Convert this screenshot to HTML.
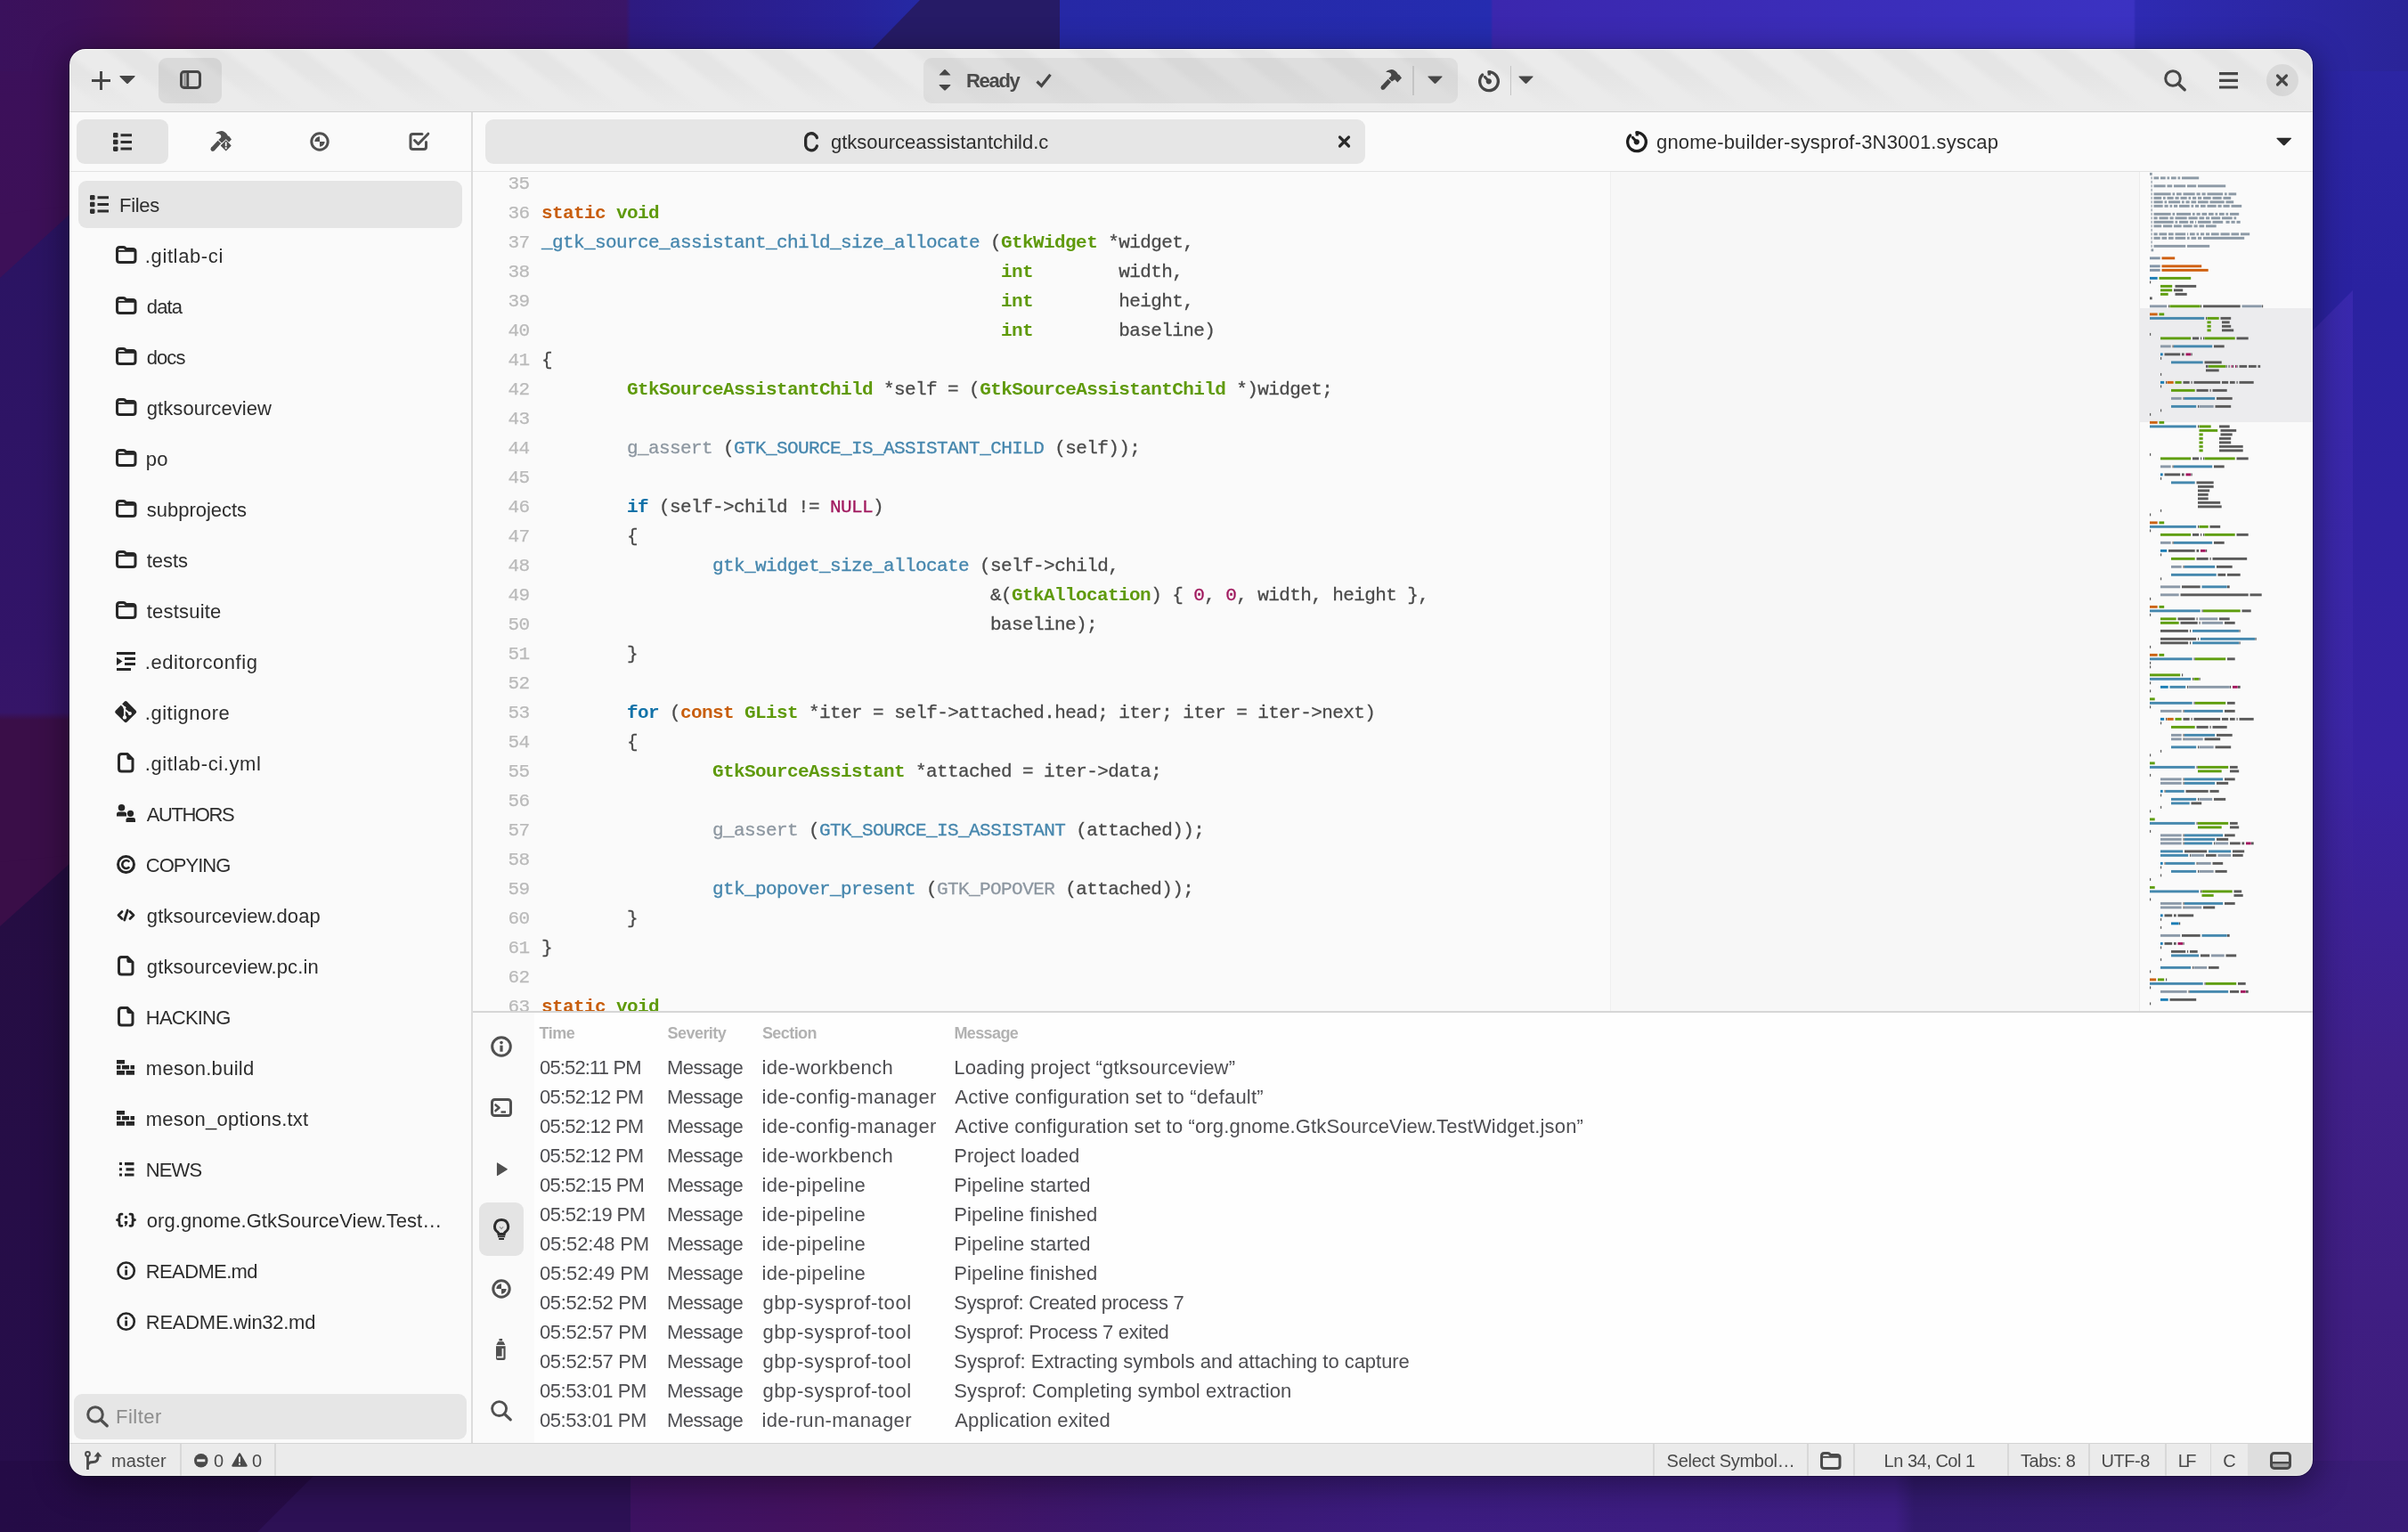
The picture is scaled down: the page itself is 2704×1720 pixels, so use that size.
<!DOCTYPE html><html><head><meta charset="utf-8"><title>Builder</title><style>
html,body{margin:0;padding:0;width:2704px;height:1720px;overflow:hidden;background:#2d1463;}
.b,.t,.m,.i{position:absolute;}
.t{font-family:"Liberation Sans",sans-serif;white-space:pre;line-height:1;}
.m{font-family:"Liberation Mono",monospace;white-space:pre;line-height:1;}
.i{color:#3d3d3d;fill:currentColor;overflow:visible;}
#win{will-change:transform;position:absolute;left:0;top:0;width:2704px;height:1720px;clip-path:inset(55px 107px 63px 78px round 18px);}
#shadow{position:absolute;left:78px;top:55px;width:2519px;height:1602px;border-radius:18px;box-shadow:0 0 0 1px rgba(0,0,0,.25),0 8px 36px 4px rgba(0,0,0,.38);}
.cl{position:absolute;left:608px;height:33px;font-family:"Liberation Mono",monospace;font-size:21px;letter-spacing:-0.6px;white-space:pre;line-height:1;color:#4a4a4a;-webkit-text-stroke:.3px;}
.ln{position:absolute;left:531px;width:63.5px;text-align:right;height:33px;font-family:"Liberation Mono",monospace;font-size:21px;letter-spacing:-0.6px;line-height:1;color:#bababa;-webkit-text-stroke:.25px;}
.cl b{font-weight:700;-webkit-text-stroke:0;}
.k{color:#1272a8}.o{color:#c85e0d}.ty{color:#5f9a0c}.ma{color:#8c96a0}.f{color:#4586ad}.n{color:#a0195e}

</style></head><body>
<svg class="b" style="left:0;top:0;width:2704px;height:1720px" viewBox="0 0 2704 1720" preserveAspectRatio="none">
<defs>
<linearGradient id="gt" x1="0" x2="2704" y1="0" y2="0" gradientUnits="userSpaceOnUse">
<stop offset="0" stop-color="#3a115c"/><stop offset=".03" stop-color="#3c1059"/><stop offset=".075" stop-color="#47104f"/><stop offset=".145" stop-color="#43115a"/><stop offset=".26" stop-color="#3a1568"/><stop offset=".262" stop-color="#2e1a80"/><stop offset=".353" stop-color="#28229a"/><stop offset=".382" stop-color="#2529a4"/><stop offset=".44" stop-color="#2628a5"/><stop offset=".619" stop-color="#252cb0"/><stop offset=".620" stop-color="#3b27ae"/><stop offset=".886" stop-color="#3b32c2"/><stop offset=".887" stop-color="#2e2ab2"/><stop offset="1" stop-color="#2a2498"/></linearGradient>
<linearGradient id="gl" x1="0" x2="0" y1="0" y2="1720" gradientUnits="userSpaceOnUse">
<stop offset="0" stop-color="#3b105b"/><stop offset=".14" stop-color="#3d1058"/><stop offset=".1401" stop-color="#2a1462"/><stop offset=".42" stop-color="#321468"/><stop offset=".465" stop-color="#361568"/><stop offset=".47" stop-color="#3a0e48"/><stop offset=".564" stop-color="#3a0e48"/><stop offset=".5641" stop-color="#250d42"/><stop offset="1" stop-color="#270d4c"/></linearGradient>
<linearGradient id="gr" x1="0" x2="0" y1="0" y2="1720" gradientUnits="userSpaceOnUse">
<stop offset="0" stop-color="#2c26a4"/><stop offset=".19" stop-color="#2a22a0"/><stop offset=".5" stop-color="#3822a2"/><stop offset=".7" stop-color="#40208a"/><stop offset="1" stop-color="#3e1c7a"/></linearGradient>
<linearGradient id="gb" x1="0" x2="2704" y1="0" y2="0" gradientUnits="userSpaceOnUse">
<stop offset="0" stop-color="#240b46"/><stop offset=".26" stop-color="#2a0c48"/><stop offset=".262" stop-color="#3d1262"/><stop offset=".355" stop-color="#45125f"/><stop offset=".477" stop-color="#3a1870"/><stop offset=".59" stop-color="#3c1c80"/><stop offset=".787" stop-color="#3e1e84"/><stop offset=".795" stop-color="#321a6e"/><stop offset="1" stop-color="#3a1c78"/></linearGradient>
<linearGradient id="gband" x1="0" x2="0" y1="326" y2="1150" gradientUnits="userSpaceOnUse"><stop offset="0" stop-color="#3c2ab0" stop-opacity=".85"/><stop offset=".6" stop-color="#3e28a8" stop-opacity=".7"/><stop offset="1" stop-color="#42228c" stop-opacity="0"/></linearGradient>
</defs>
<rect x="0" y="0" width="2704" height="1720" fill="#2d1463"/>
<path d="M0 40H90V1720H0z" fill="url(#gl)"/>
<path d="M0 240V312L90 230z" fill="#3d1058"/>
<path d="M0 968V1040L90 959z" fill="#3a0e48"/>
<path d="M2590 40H2704V1720H2590z" fill="url(#gr)"/>
<path d="M2590 378L2642 326V1150H2590z" fill="url(#gband)"/>
<rect x="0" y="0" width="2704" height="80" fill="url(#gt)"/>
<path d="M1033 0H1190V80H955z" fill="#261b66"/>
<rect x="0" y="1640" width="2704" height="80" fill="url(#gb)"/>
<path d="M369 1640L289 1720H708V1640z" fill="#2d1155"/>
</svg>
<div id="shadow"></div><div id="win">
<div class="b" style="left:78px;top:55px;width:2519px;height:71px;background:#ebebeb;background-image:linear-gradient(to bottom,rgba(235,235,235,0) 0%,rgba(235,235,235,0) 40%,rgba(235,235,235,1) 100%),repeating-linear-gradient(37.6deg,#ebebeb 0px,#ebebeb 22px,#e5e5e5 30px,#e5e5e5 47px,#ebebeb 55px);"></div>
<div class="b" style="left:78px;top:125px;width:2519px;height:1px;background:#d2d2d2;"></div>
<div class="b" style="left:78px;top:126px;width:451px;height:1494px;background:#fafafa;"></div>
<div class="b" style="left:529px;top:126px;width:2px;height:1494px;background:#dcdcdc;"></div>
<div class="b" style="left:531px;top:126px;width:2066px;height:1010px;background:#fafafa;"></div>
<div class="b" style="left:78px;top:192px;width:451px;height:1px;background:#e2e2e2;"></div>
<div class="b" style="left:531px;top:192px;width:2066px;height:1px;background:#e2e2e2;"></div>
<div class="b" style="left:1808px;top:193px;width:594px;height:942px;background:#f7f7f7;"></div>
<div class="b" style="left:1808px;top:193px;width:1px;height:942px;background:#efefef;"></div>
<div class="b" style="left:2402px;top:193px;width:1px;height:942px;background:#ececec;"></div>
<div class="b" style="left:2403px;top:346px;width:194px;height:128px;background:#ececee;"></div>
<div class="b" style="left:531px;top:1135px;width:2066px;height:2px;background:#d6d6d6;"></div>
<div class="b" style="left:531px;top:1137px;width:69px;height:483px;background:#fafafa;"></div>
<div class="b" style="left:600px;top:1137px;width:1997px;height:483px;background:#fefefe;"></div>
<div class="b" style="left:78px;top:1620px;width:2519px;height:37px;background:#ebebeb;"></div>
<div class="b" style="left:78px;top:1620px;width:2519px;height:1px;background:#d4d4d4;"></div>
<svg class="i" style="left:102.5px;top:79.5px;width:21px;height:21px;color:#464646;" viewBox="0 0 21 21"><path d="M0 9h21v3H0z M9 0h3v21H9z"/></svg>
<svg class="i" style="left:134.0px;top:85.4px;width:18px;height:9.2px;color:#464646;" viewBox="0 0 18 9"><path d="M1.2 0h15.6q1.6 0 .5 1.2L10 8.5q-1 1-2 0L.7 1.2Q-.4 0 1.2 0z"/></svg>
<div class="b" style="left:178px;top:65px;width:71px;height:51px;background:rgba(0,0,0,.07);border-radius:9px;"></div>
<svg class="i" style="left:201.5px;top:79.0px;width:24px;height:21px;color:#464646;" viewBox="0 0 24 21"><rect x="4" y="3" width="5" height="15" opacity=".38"/><rect x="1.5" y="1.5" width="21" height="18" rx="3.2" stroke="currentColor" fill="none" stroke-width="3"/><rect x="7.6" y="2" width="2.6" height="17"/></svg>
<div class="b" style="left:1037px;top:65px;width:600px;height:51px;background:rgba(0,0,0,.055);border-radius:9px;"></div>
<svg class="i" style="left:1054.0px;top:78.0px;width:14px;height:6.5px;color:#464646;" viewBox="0 0 18 9"><path d="M1.2 9h15.6q1.6 0 .5-1.2L10 .5q-1-1-2 0L.7 7.8Q-.4 9 1.2 9z"/></svg>
<svg class="i" style="left:1054.0px;top:95.3px;width:14px;height:6.7px;color:#464646;" viewBox="0 0 18 9"><path d="M1.2 0h15.6q1.6 0 .5 1.2L10 8.5q-1 1-2 0L.7 1.2Q-.4 0 1.2 0z"/></svg>
<span class="t" style="left:1085.0px;top:80px;font-size:22px;font-weight:700;color:#4a4a4a;letter-spacing:-1.30px;">Ready</span>
<svg class="i" style="left:1163.0px;top:82.0px;width:18px;height:16px;color:#464646;" viewBox="0 0 18 16"><path d="M1.5 9.5l5 4.8L16.5 1.8" stroke="currentColor" fill="none" stroke-width="3.2"/></svg>
<svg class="i" style="left:1550.0px;top:78.0px;width:24px;height:23px;color:#464646;" viewBox="0 0 24 23"><circle cx="2.900" cy="20.500" r="2.400"/><path d="M2.900 20.500L10.400 12.400" stroke="currentColor" fill="none" stroke-width="4.800"/><path d="M6.200 2.700C7.500 1.500 9.300.600 12.600 0c2.400 0 4.400 1.500 5.700 3l2 3 .600-.500L24 9.400l-4.700 5.100-3-3.200-3.300 2.100L9.300 10 12 7.400c.500-1.400.300-2.400-.500-3.200C10.500 3.300 9 3 8 3z"/></svg>
<div class="b" style="left:1586px;top:74px;width:1.5px;height:33px;background:#c4c4c4;"></div>
<svg class="i" style="left:1603.0px;top:85.2px;width:17px;height:9.3px;color:#464646;" viewBox="0 0 18 9"><path d="M1.2 0h15.6q1.6 0 .5 1.2L10 8.5q-1 1-2 0L.7 1.2Q-.4 0 1.2 0z"/></svg>
<svg class="i" style="left:1659.5px;top:78.6px;width:24px;height:24px;color:#464646;" viewBox="0 0 24 24"><path d="M12 1.950A10.350 10.350 0 1 1 4.680 4.980" stroke="currentColor" fill="none" stroke-width="3.300" stroke-linecap="round"/><path d="M12.300.300V5.600" stroke="currentColor" fill="none" stroke-width="3.300"/><circle cx="11.800" cy="12.300" r="3.100"/><path d="M11.800 12.300L7.300 7.300" stroke="currentColor" fill="none" stroke-width="3" stroke-linecap="round"/></svg>
<div class="b" style="left:1695.5px;top:74px;width:1.5px;height:33px;background:#c4c4c4;"></div>
<svg class="i" style="left:1705.0px;top:85.2px;width:17px;height:9.3px;color:#464646;" viewBox="0 0 18 9"><path d="M1.2 0h15.6q1.6 0 .5 1.2L10 8.5q-1 1-2 0L.7 1.2Q-.4 0 1.2 0z"/></svg>
<svg class="i" style="left:2430.0px;top:78.0px;width:25px;height:24px;color:#464646;" viewBox="0 0 25 24"><circle cx="10" cy="10" r="8.300" stroke="currentColor" fill="none" stroke-width="3"/><path d="M16 16l7.200 6.800" stroke="currentColor" fill="none" stroke-width="3.400" stroke-linecap="round"/></svg>
<svg class="i" style="left:2492.0px;top:80.7px;width:21px;height:19px;color:#464646;" viewBox="0 0 21 19"><path d="M0 0h21v3.200H0z M0 7.700h21v3.200H0z M0 15.400h21v3.200H0z"/></svg>
<div class="b" style="left:2544.5px;top:72px;width:36px;height:36px;background:rgba(0,0,0,.075);border-radius:18px;"></div>
<svg class="i" style="left:2556.0px;top:84.0px;width:13px;height:12px;color:#464646;" viewBox="0 0 13 12"><path d="M1.500 1l10 10M11.500 1l-10 10" stroke="currentColor" fill="none" stroke-width="3.200" stroke-linecap="round"/></svg>
<div class="b" style="left:86px;top:134px;width:103px;height:50px;background:#e4e4e4;border-radius:9px;"></div>
<svg class="i" style="left:126.5px;top:148.5px;width:21px;height:21px;color:#2e2e2e;" viewBox="0 0 21 21"><rect x="0" y="0" width="5.500" height="5.500" rx="1.300"/><rect x="0" y="7.700" width="5.500" height="5.500" rx="1.300"/><rect x="0" y="15.400" width="5.500" height="5.500" rx="1.300"/><path d="M8.500 1.200H21v3H8.500z M8.500 8.900H21v3H8.500z M8.500 16.600H21v3H8.500z"/></svg>
<svg class="i" style="left:236.0px;top:147.0px;width:24.5px;height:24px;color:#505050;" viewBox="0 0 24.5 24"><circle cx="2.900" cy="20.500" r="2.400"/><path d="M2.900 20.500L10.400 12.400" stroke="currentColor" fill="none" stroke-width="4.800"/><path d="M6.200 2.700C7.500 1.500 9.300.600 12.600 0c2.400 0 4.400 1.500 5.700 3l2 3 .600-.500L24 9.400l-4.700 5.100-3-3.200-3.300 2.100L9.300 10 12 7.400c.500-1.400.300-2.400-.500-3.200C10.500 3.300 9 3 8 3z"/><path d="M17.700 9.200l7.300 7.300-7.300 7.300-7.300-7.300z" fill="#fafafa"/><path d="M17.700 10.900l5.600 5.600q.600.600 0 1.200l-5 5q-.600.600-1.200 0l-5-5q-.600-.600 0-1.200l5-5q.600-.600 1.200 0z" transform="translate(0 -0.600)"/><path d="M16.800 12.600h1.800v4.600h-1.800z M16.700 18.200h2v2h-2z" fill="#fafafa"/></svg>
<svg class="i" style="left:347.0px;top:147.0px;width:24px;height:24px;color:#505050;" viewBox="0 0 24 24"><circle cx="12" cy="12" r="9.200" stroke="currentColor" fill="none" stroke-width="3"/><path d="M12 12V6.300A5.700 5.700 0 0 0 6.300 12z M12 12v5.700A5.700 5.700 0 0 0 17.700 12z"/></svg>
<svg class="i" style="left:459.2px;top:147.0px;width:24px;height:24px;color:#505050;" viewBox="0 0 24 24"><path d="M19.500 12.500v5.500q0 2.500-2.500 2.500H4.500Q2 20.500 2 18V6q0-2.500 2.500-2.500H15" stroke="currentColor" fill="none" stroke-width="3" stroke-linecap="round"/><path d="M6.500 10.500l4.200 4.200L21.800 3.200" stroke="currentColor" fill="none" stroke-width="3" stroke-linecap="round" stroke-linejoin="round"/></svg>
<div class="b" style="left:88px;top:203px;width:431px;height:53px;background:#e5e5e5;border-radius:9px;"></div>
<svg class="i" style="left:100.8px;top:219.0px;width:21px;height:21px;color:#2e2e2e;" viewBox="0 0 21 21"><rect x="0" y="0" width="5.500" height="5.500" rx="1.300"/><rect x="0" y="7.700" width="5.500" height="5.500" rx="1.300"/><rect x="0" y="15.400" width="5.500" height="5.500" rx="1.300"/><path d="M8.500 1.200H21v3H8.500z M8.500 8.900H21v3H8.500z M8.500 16.600H21v3H8.500z"/></svg>
<span class="t" style="left:134.0px;top:220px;font-size:22px;color:#2e2e2e;letter-spacing:-0.31px;">Files</span>
<svg class="i" style="left:129.6px;top:276.4px;width:23.5px;height:20px;color:#262626;" viewBox="0 0 23.5 20"><path d="M1.500 4.500Q1.500 1.500 4.500 1.500H8.500Q10.500 1.500 11 3.500H19Q22 3.500 22 6.500V15.500Q22 18.500 19 18.500H4.500Q1.500 18.500 1.500 15.500z" stroke="currentColor" fill="none" stroke-width="3" stroke-linejoin="round"/><path d="M2.500 5.800H21" stroke="currentColor" fill="none" stroke-width="2"/></svg>
<span class="t" style="left:162.8px;top:277px;font-size:22px;color:#2e2e2e;letter-spacing:0.62px;">.gitlab-ci</span>
<svg class="i" style="left:129.6px;top:333.4px;width:23.5px;height:20px;color:#262626;" viewBox="0 0 23.5 20"><path d="M1.500 4.500Q1.500 1.500 4.500 1.500H8.500Q10.500 1.500 11 3.500H19Q22 3.500 22 6.500V15.500Q22 18.500 19 18.500H4.500Q1.500 18.500 1.500 15.500z" stroke="currentColor" fill="none" stroke-width="3" stroke-linejoin="round"/><path d="M2.500 5.800H21" stroke="currentColor" fill="none" stroke-width="2"/></svg>
<span class="t" style="left:164.8px;top:334px;font-size:22px;color:#2e2e2e;letter-spacing:-0.89px;">data</span>
<svg class="i" style="left:129.6px;top:390.4px;width:23.5px;height:20px;color:#262626;" viewBox="0 0 23.5 20"><path d="M1.500 4.500Q1.500 1.500 4.500 1.500H8.500Q10.500 1.500 11 3.500H19Q22 3.500 22 6.500V15.500Q22 18.500 19 18.500H4.500Q1.500 18.500 1.500 15.500z" stroke="currentColor" fill="none" stroke-width="3" stroke-linejoin="round"/><path d="M2.500 5.800H21" stroke="currentColor" fill="none" stroke-width="2"/></svg>
<span class="t" style="left:164.8px;top:391px;font-size:22px;color:#2e2e2e;letter-spacing:-0.96px;">docs</span>
<svg class="i" style="left:129.6px;top:447.4px;width:23.5px;height:20px;color:#262626;" viewBox="0 0 23.5 20"><path d="M1.500 4.500Q1.500 1.500 4.500 1.500H8.500Q10.500 1.500 11 3.500H19Q22 3.500 22 6.500V15.500Q22 18.500 19 18.500H4.500Q1.500 18.500 1.500 15.500z" stroke="currentColor" fill="none" stroke-width="3" stroke-linejoin="round"/><path d="M2.500 5.800H21" stroke="currentColor" fill="none" stroke-width="2"/></svg>
<span class="t" style="left:164.8px;top:448px;font-size:22px;color:#2e2e2e;letter-spacing:0.06px;">gtksourceview</span>
<svg class="i" style="left:129.6px;top:504.4px;width:23.5px;height:20px;color:#262626;" viewBox="0 0 23.5 20"><path d="M1.500 4.500Q1.500 1.500 4.500 1.500H8.500Q10.500 1.500 11 3.500H19Q22 3.500 22 6.500V15.500Q22 18.500 19 18.500H4.500Q1.500 18.500 1.500 15.500z" stroke="currentColor" fill="none" stroke-width="3" stroke-linejoin="round"/><path d="M2.500 5.800H21" stroke="currentColor" fill="none" stroke-width="2"/></svg>
<span class="t" style="left:163.8px;top:505px;font-size:22px;color:#2e2e2e;letter-spacing:0.26px;">po</span>
<svg class="i" style="left:129.6px;top:561.4px;width:23.5px;height:20px;color:#262626;" viewBox="0 0 23.5 20"><path d="M1.500 4.500Q1.500 1.500 4.500 1.500H8.500Q10.500 1.500 11 3.500H19Q22 3.500 22 6.500V15.500Q22 18.500 19 18.500H4.500Q1.500 18.500 1.500 15.500z" stroke="currentColor" fill="none" stroke-width="3" stroke-linejoin="round"/><path d="M2.500 5.800H21" stroke="currentColor" fill="none" stroke-width="2"/></svg>
<span class="t" style="left:164.8px;top:562px;font-size:22px;color:#2e2e2e;letter-spacing:-0.03px;">subprojects</span>
<svg class="i" style="left:129.6px;top:618.4px;width:23.5px;height:20px;color:#262626;" viewBox="0 0 23.5 20"><path d="M1.500 4.500Q1.500 1.500 4.500 1.500H8.500Q10.500 1.500 11 3.500H19Q22 3.500 22 6.500V15.500Q22 18.500 19 18.500H4.500Q1.500 18.500 1.500 15.500z" stroke="currentColor" fill="none" stroke-width="3" stroke-linejoin="round"/><path d="M2.500 5.800H21" stroke="currentColor" fill="none" stroke-width="2"/></svg>
<span class="t" style="left:164.8px;top:619px;font-size:22px;color:#2e2e2e;letter-spacing:-0.06px;">tests</span>
<svg class="i" style="left:129.6px;top:675.4px;width:23.5px;height:20px;color:#262626;" viewBox="0 0 23.5 20"><path d="M1.500 4.500Q1.500 1.500 4.500 1.500H8.500Q10.500 1.500 11 3.500H19Q22 3.500 22 6.500V15.500Q22 18.500 19 18.500H4.500Q1.500 18.500 1.500 15.500z" stroke="currentColor" fill="none" stroke-width="3" stroke-linejoin="round"/><path d="M2.500 5.800H21" stroke="currentColor" fill="none" stroke-width="2"/></svg>
<span class="t" style="left:164.8px;top:676px;font-size:22px;color:#2e2e2e;letter-spacing:0.19px;">testsuite</span>
<svg class="i" style="left:130.8px;top:731.9px;width:21px;height:21px;color:#262626;" viewBox="0 0 21 21"><path d="M0 0h21v3H0z M9 6h12v3H9z M9 12h12v3H9z M0 18h16v3H0z M0 6l6.500 4.500L0 15z"/></svg>
<span class="t" style="left:162.8px;top:733px;font-size:22px;color:#2e2e2e;letter-spacing:0.52px;">.editorconfig</span>
<svg class="i" style="left:129.1px;top:787.2px;width:24.4px;height:24.4px;color:#262626;" viewBox="0 0 24.4 24.4"><rect x="-9.100" y="-9.100" width="18.200" height="18.200" rx="2.100" transform="translate(12.200 12.200) rotate(45)"/><g stroke="#fafafa" stroke-width="1.900" fill="none"><path d="M7.200 3.700L10.900 7.300V18.400"/><path d="M11 9.600L16.800 14.100"/></g><circle cx="11" cy="18.400" r="2.200" fill="#fafafa"/><circle cx="16.800" cy="14.100" r="2.100" fill="#fafafa"/><circle cx="10.900" cy="7.600" r="1.600" fill="#fafafa"/></svg>
<span class="t" style="left:162.8px;top:790px;font-size:22px;color:#2e2e2e;letter-spacing:0.50px;">.gitignore</span>
<svg class="i" style="left:132.1px;top:845.1px;width:18.5px;height:22.5px;color:#262626;" viewBox="0 0 18.5 22.5"><path d="M1.500 4.500Q1.500 1.500 4.500 1.500H11.200L17 7.300V18Q17 21 14 21H4.500Q1.500 21 1.500 18z" stroke="currentColor" fill="none" stroke-width="3" stroke-linejoin="round"/><path d="M10.300 1.500V5.500Q10.300 8 12.800 8H17z"/></svg>
<span class="t" style="left:162.8px;top:847px;font-size:22px;color:#2e2e2e;letter-spacing:0.60px;">.gitlab-ci.yml</span>
<svg class="i" style="left:130.8px;top:903.4px;width:21px;height:20px;color:#262626;" viewBox="0 0 21 20"><circle cx="5.500" cy="3.800" r="3.800"/><path d="M0 13.500v-2.500q0-2.500 2.500-2.500h6q2.500 0 2.500 2.500v2.500z"/><circle cx="15.500" cy="10.300" r="3.600"/><path d="M10.500 20v-2.700q0-2.400 2.400-2.400h5.700q2.400 0 2.400 2.400v2.700z"/></svg>
<span class="t" style="left:164.8px;top:904px;font-size:22px;color:#2e2e2e;letter-spacing:-1.46px;">AUTHORS</span>
<svg class="i" style="left:130.8px;top:959.9px;width:21px;height:21px;color:#262626;" viewBox="0 0 21 21"><circle cx="10.500" cy="10.500" r="9" stroke="currentColor" fill="none" stroke-width="3"/><path d="M14.300 7.700A4.500 4.500 0 1 0 14.300 13.300" stroke="currentColor" fill="none" stroke-width="2.600"/></svg>
<span class="t" style="left:163.8px;top:961px;font-size:22px;color:#2e2e2e;letter-spacing:-0.99px;">COPYING</span>
<svg class="i" style="left:130.8px;top:1020.9px;width:21px;height:13px;color:#262626;" viewBox="0 0 21 13"><path d="M6 2.500L2 6.500l4 4M15 2.500l4 4-4 4M12.300 1L8.700 12" stroke="currentColor" fill="none" stroke-width="2.800" stroke-linecap="round" stroke-linejoin="round"/></svg>
<span class="t" style="left:164.8px;top:1018px;font-size:22px;color:#2e2e2e;letter-spacing:0.10px;">gtksourceview.doap</span>
<svg class="i" style="left:132.1px;top:1073.2px;width:18.5px;height:22.5px;color:#262626;" viewBox="0 0 18.5 22.5"><path d="M1.500 4.500Q1.500 1.500 4.500 1.500H11.200L17 7.300V18Q17 21 14 21H4.500Q1.500 21 1.500 18z" stroke="currentColor" fill="none" stroke-width="3" stroke-linejoin="round"/><path d="M10.300 1.500V5.500Q10.300 8 12.800 8H17z"/></svg>
<span class="t" style="left:164.8px;top:1075px;font-size:22px;color:#2e2e2e;letter-spacing:0.12px;">gtksourceview.pc.in</span>
<svg class="i" style="left:132.1px;top:1130.2px;width:18.5px;height:22.5px;color:#262626;" viewBox="0 0 18.5 22.5"><path d="M1.500 4.500Q1.500 1.500 4.500 1.500H11.200L17 7.300V18Q17 21 14 21H4.500Q1.500 21 1.500 18z" stroke="currentColor" fill="none" stroke-width="3" stroke-linejoin="round"/><path d="M10.300 1.500V5.500Q10.300 8 12.800 8H17z"/></svg>
<span class="t" style="left:163.8px;top:1132px;font-size:22px;color:#2e2e2e;letter-spacing:-0.79px;">HACKING</span>
<svg class="i" style="left:131.3px;top:1189.9px;width:20px;height:17px;color:#262626;" viewBox="0 0 20 17"><path d="M0 0h9v4.500H0z M0 6h4.500v4.500H0z M6 6h8v4.500H6z M15.500 6H20v4.500h-4.500z M0 12h9v4.700H0z M10.500 12H20v4.700h-9.500z"/></svg>
<span class="t" style="left:163.8px;top:1189px;font-size:22px;color:#2e2e2e;letter-spacing:0.28px;">meson.build</span>
<svg class="i" style="left:131.3px;top:1246.9px;width:20px;height:17px;color:#262626;" viewBox="0 0 20 17"><path d="M0 0h9v4.500H0z M0 6h4.500v4.500H0z M6 6h8v4.500H6z M15.500 6H20v4.500h-4.500z M0 12h9v4.700H0z M10.500 12H20v4.700h-9.500z"/></svg>
<span class="t" style="left:163.8px;top:1246px;font-size:22px;color:#2e2e2e;letter-spacing:0.24px;">meson_options.txt</span>
<svg class="i" style="left:133.9px;top:1304.7px;width:16.5px;height:15.5px;color:#262626;" viewBox="0 0 16.5 15.5"><path d="M0 0h3v3H0z M0 6.200h3v3H0z M0 12.400h3v3H0z M6 0h10.500v3.200H6z M7.500 6.200h9v3.200h-9z M6 12.400h10.500v3.200H6z"/></svg>
<span class="t" style="left:163.8px;top:1303px;font-size:22px;color:#2e2e2e;letter-spacing:-0.88px;">NEWS</span>
<svg class="i" style="left:129.8px;top:1361.7px;width:23px;height:15.5px;color:#262626;" viewBox="0 0 23 15.5"><path d="M7 1.200H6Q4 1.200 4 3.200V5.500Q4 7.700 1.500 7.700Q4 7.700 4 10v2.300q0 2 2 2h1M16 1.200h1q2 0 2 2V5.500q0 2.200 2.500 2.200Q19 7.700 19 10v2.300q0 2-2 2h-1" stroke="currentColor" fill="none" stroke-width="2.800" stroke-linejoin="round" stroke-linecap="round"/><circle cx="11.500" cy="4.500" r="1.700"/><path d="M9.800 9h3.400v2.500l-1.700 3h-1.700l1-2.500h-1z"/></svg>
<span class="t" style="left:164.8px;top:1360px;font-size:22px;color:#2e2e2e;letter-spacing:0.06px;">org.gnome.GtkSourceView.Test…</span>
<svg class="i" style="left:130.7px;top:1415.8px;width:21.3px;height:21.3px;color:#262626;" viewBox="0 0 24 24"><circle cx="12" cy="12" r="10.300" stroke="currentColor" fill="none" stroke-width="3"/><circle cx="12" cy="7.600" r="1.800"/><path d="M10.400 10.700h3.200v7h-3.200z"/></svg>
<span class="t" style="left:163.8px;top:1417px;font-size:22px;color:#2e2e2e;letter-spacing:-0.63px;">README.md</span>
<svg class="i" style="left:130.7px;top:1472.8px;width:21.3px;height:21.3px;color:#262626;" viewBox="0 0 24 24"><circle cx="12" cy="12" r="10.300" stroke="currentColor" fill="none" stroke-width="3"/><circle cx="12" cy="7.600" r="1.800"/><path d="M10.400 10.700h3.200v7h-3.200z"/></svg>
<span class="t" style="left:163.8px;top:1474px;font-size:22px;color:#2e2e2e;letter-spacing:-0.27px;">README.win32.md</span>
<div class="b" style="left:83px;top:1565px;width:441px;height:51px;background:#e6e6e6;border-radius:9px;"></div>
<svg class="i" style="left:96.5px;top:1578.0px;width:25px;height:24px;color:#505050;" viewBox="0 0 25 24"><circle cx="10" cy="10" r="8.300" stroke="currentColor" fill="none" stroke-width="3"/><path d="M16 16l7.200 6.800" stroke="currentColor" fill="none" stroke-width="3.400" stroke-linecap="round"/></svg>
<span class="t" style="left:130.0px;top:1580px;font-size:22px;color:#8c8c8c;letter-spacing:0.49px;">Filter</span>
<div class="b" style="left:545px;top:133.5px;width:988px;height:50.5px;background:#e6e6e6;border-radius:9px;"></div>
<svg class="i" style="left:902.9px;top:148.6px;width:16.3px;height:20.6px;color:#2a2a2a;" viewBox="0 0 16.3 20.6"><path d="M14.400 5.700A6.500 6.500 0 0 0 1.650 8.150V12.450A6.500 6.500 0 0 0 14.400 14.900" stroke="currentColor" fill="none" stroke-width="3.300" stroke-linecap="round"/></svg>
<span class="t" style="left:933.0px;top:149px;font-size:22px;color:#2e2e2e;letter-spacing:-0.01px;">gtksourceassistantchild.c</span>
<svg class="i" style="left:1503.0px;top:153.0px;width:13px;height:12px;color:#2a2a2a;" viewBox="0 0 13 12"><path d="M1.500 1l10 10M11.500 1l-10 10" stroke="currentColor" fill="none" stroke-width="3.200" stroke-linecap="round"/></svg>
<svg class="i" style="left:1826.0px;top:147.0px;width:24px;height:24px;color:#1e1e1e;" viewBox="0 0 24 24"><path d="M12 1.950A10.350 10.350 0 1 1 4.680 4.980" stroke="currentColor" fill="none" stroke-width="3.300" stroke-linecap="round"/><path d="M12.300.300V5.600" stroke="currentColor" fill="none" stroke-width="3.300"/><circle cx="11.800" cy="12.300" r="3.100"/><path d="M11.800 12.300L7.300 7.300" stroke="currentColor" fill="none" stroke-width="3" stroke-linecap="round"/></svg>
<span class="t" style="left:1860.0px;top:149px;font-size:22px;color:#2e2e2e;letter-spacing:0.18px;">gnome-builder-sysprof-3N3001.syscap</span>
<svg class="i" style="left:2555.5px;top:154.0px;width:17.5px;height:10px;color:#2a2a2a;" viewBox="0 0 18 9"><path d="M1.2 0h15.6q1.6 0 .5 1.2L10 8.5q-1 1-2 0L.7 1.2Q-.4 0 1.2 0z"/></svg>
<div class="b" style="left:531px;top:193px;width:1871px;height:942px;overflow:hidden">
<div class="ln" style="left:0;top:3.0px">35</div>
<div class="ln" style="left:0;top:36.0px">36</div>
<div class="cl" style="left:77px;top:36.0px"><b class="o">static</b> <b class="ty">void</b></div>
<div class="ln" style="left:0;top:69.0px">37</div>
<div class="cl" style="left:77px;top:69.0px"><span class="f">_gtk_source_assistant_child_size_allocate</span> (<b class="ty">GtkWidget</b> *widget,</div>
<div class="ln" style="left:0;top:102.0px">38</div>
<div class="cl" style="left:77px;top:102.0px">                                           <b class="ty">int</b>        width,</div>
<div class="ln" style="left:0;top:135.0px">39</div>
<div class="cl" style="left:77px;top:135.0px">                                           <b class="ty">int</b>        height,</div>
<div class="ln" style="left:0;top:168.0px">40</div>
<div class="cl" style="left:77px;top:168.0px">                                           <b class="ty">int</b>        baseline)</div>
<div class="ln" style="left:0;top:201.0px">41</div>
<div class="cl" style="left:77px;top:201.0px">{</div>
<div class="ln" style="left:0;top:234.0px">42</div>
<div class="cl" style="left:77px;top:234.0px">        <b class="ty">GtkSourceAssistantChild</b> *self = (<b class="ty">GtkSourceAssistantChild</b> *)widget;</div>
<div class="ln" style="left:0;top:267.0px">43</div>
<div class="ln" style="left:0;top:300.0px">44</div>
<div class="cl" style="left:77px;top:300.0px">        <span class="ma">g_assert</span> (<span class="f">GTK_SOURCE_IS_ASSISTANT_CHILD</span> (self));</div>
<div class="ln" style="left:0;top:333.0px">45</div>
<div class="ln" style="left:0;top:366.0px">46</div>
<div class="cl" style="left:77px;top:366.0px">        <b class="k">if</b> (self-&gt;child != <span class="n">NULL</span>)</div>
<div class="ln" style="left:0;top:399.0px">47</div>
<div class="cl" style="left:77px;top:399.0px">        {</div>
<div class="ln" style="left:0;top:432.0px">48</div>
<div class="cl" style="left:77px;top:432.0px">                <span class="f">gtk_widget_size_allocate</span> (self-&gt;child,</div>
<div class="ln" style="left:0;top:465.0px">49</div>
<div class="cl" style="left:77px;top:465.0px">                                          &amp;(<b class="ty">GtkAllocation</b>) { <span class="n">0</span>, <span class="n">0</span>, width, height },</div>
<div class="ln" style="left:0;top:498.0px">50</div>
<div class="cl" style="left:77px;top:498.0px">                                          baseline);</div>
<div class="ln" style="left:0;top:531.0px">51</div>
<div class="cl" style="left:77px;top:531.0px">        }</div>
<div class="ln" style="left:0;top:564.0px">52</div>
<div class="ln" style="left:0;top:597.0px">53</div>
<div class="cl" style="left:77px;top:597.0px">        <b class="k">for</b> (<b class="o">const</b> <b class="ty">GList</b> *iter = self-&gt;attached.head; iter; iter = iter-&gt;next)</div>
<div class="ln" style="left:0;top:630.0px">54</div>
<div class="cl" style="left:77px;top:630.0px">        {</div>
<div class="ln" style="left:0;top:663.0px">55</div>
<div class="cl" style="left:77px;top:663.0px">                <b class="ty">GtkSourceAssistant</b> *attached = iter-&gt;data;</div>
<div class="ln" style="left:0;top:696.0px">56</div>
<div class="ln" style="left:0;top:729.0px">57</div>
<div class="cl" style="left:77px;top:729.0px">                <span class="ma">g_assert</span> (<span class="f">GTK_SOURCE_IS_ASSISTANT</span> (attached));</div>
<div class="ln" style="left:0;top:762.0px">58</div>
<div class="ln" style="left:0;top:795.0px">59</div>
<div class="cl" style="left:77px;top:795.0px">                <span class="f">gtk_popover_present</span> (<span class="ma">GTK_POPOVER</span> (attached));</div>
<div class="ln" style="left:0;top:828.0px">60</div>
<div class="cl" style="left:77px;top:828.0px">        }</div>
<div class="ln" style="left:0;top:861.0px">61</div>
<div class="cl" style="left:77px;top:861.0px">}</div>
<div class="ln" style="left:0;top:894.0px">62</div>
<div class="ln" style="left:0;top:927.0px">63</div>
<div class="cl" style="left:77px;top:927.0px"><b class="o">static</b> <b class="ty">void</b></div>
</div>
<svg class="b" style="left:0;top:0;width:2704px;height:1720px" viewBox="0 0 2704 1720" shape-rendering="auto"><rect x="2414.0" y="193.90" width="2.7" height="2.9" fill="#8d9aa6"/><rect x="2415.5" y="198.40" width="1.2" height="2.9" fill="#8d9aa6"/><rect x="2418.5" y="198.40" width="5.7" height="2.9" fill="#8d9aa6"/><rect x="2426.0" y="198.40" width="5.7" height="2.9" fill="#8d9aa6"/><rect x="2433.5" y="198.40" width="2.7" height="2.9" fill="#8d9aa6"/><rect x="2438.0" y="198.40" width="5.7" height="2.9" fill="#8d9aa6"/><rect x="2445.5" y="198.40" width="2.7" height="2.9" fill="#8d9aa6"/><rect x="2450.0" y="198.40" width="19.2" height="2.9" fill="#8d9aa6"/><rect x="2415.5" y="202.90" width="1.2" height="2.9" fill="#8d9aa6"/><rect x="2415.5" y="207.40" width="1.2" height="2.9" fill="#8d9aa6"/><rect x="2418.5" y="207.40" width="13.2" height="2.9" fill="#8d9aa6"/><rect x="2433.5" y="207.40" width="5.7" height="2.9" fill="#8d9aa6"/><rect x="2441.0" y="207.40" width="13.2" height="2.9" fill="#8d9aa6"/><rect x="2456.0" y="207.40" width="10.2" height="2.9" fill="#8d9aa6"/><rect x="2468.0" y="207.40" width="31.2" height="2.9" fill="#8d9aa6"/><rect x="2415.5" y="211.90" width="1.2" height="2.9" fill="#8d9aa6"/><rect x="2415.5" y="216.40" width="1.2" height="2.9" fill="#8d9aa6"/><rect x="2418.5" y="216.40" width="19.2" height="2.9" fill="#8d9aa6"/><rect x="2439.5" y="216.40" width="2.7" height="2.9" fill="#8d9aa6"/><rect x="2444.0" y="216.40" width="5.7" height="2.9" fill="#8d9aa6"/><rect x="2451.5" y="216.40" width="13.2" height="2.9" fill="#8d9aa6"/><rect x="2466.5" y="216.40" width="4.2" height="2.9" fill="#8d9aa6"/><rect x="2472.5" y="216.40" width="4.2" height="2.9" fill="#8d9aa6"/><rect x="2478.5" y="216.40" width="17.7" height="2.9" fill="#8d9aa6"/><rect x="2498.0" y="216.40" width="2.7" height="2.9" fill="#8d9aa6"/><rect x="2502.5" y="216.40" width="8.7" height="2.9" fill="#8d9aa6"/><rect x="2415.5" y="220.90" width="1.2" height="2.9" fill="#8d9aa6"/><rect x="2418.5" y="220.90" width="8.7" height="2.9" fill="#8d9aa6"/><rect x="2429.0" y="220.90" width="2.7" height="2.9" fill="#8d9aa6"/><rect x="2433.5" y="220.90" width="7.2" height="2.9" fill="#8d9aa6"/><rect x="2442.5" y="220.90" width="4.2" height="2.9" fill="#8d9aa6"/><rect x="2448.5" y="220.90" width="7.2" height="2.9" fill="#8d9aa6"/><rect x="2457.5" y="220.90" width="2.7" height="2.9" fill="#8d9aa6"/><rect x="2462.0" y="220.90" width="4.2" height="2.9" fill="#8d9aa6"/><rect x="2468.0" y="220.90" width="4.2" height="2.9" fill="#8d9aa6"/><rect x="2474.0" y="220.90" width="8.7" height="2.9" fill="#8d9aa6"/><rect x="2484.5" y="220.90" width="10.2" height="2.9" fill="#8d9aa6"/><rect x="2496.5" y="220.90" width="8.7" height="2.9" fill="#8d9aa6"/><rect x="2415.5" y="225.40" width="1.2" height="2.9" fill="#8d9aa6"/><rect x="2418.5" y="225.40" width="10.2" height="2.9" fill="#8d9aa6"/><rect x="2430.5" y="225.40" width="2.7" height="2.9" fill="#8d9aa6"/><rect x="2435.0" y="225.40" width="13.2" height="2.9" fill="#8d9aa6"/><rect x="2450.0" y="225.40" width="2.7" height="2.9" fill="#8d9aa6"/><rect x="2454.5" y="225.40" width="4.2" height="2.9" fill="#8d9aa6"/><rect x="2460.5" y="225.40" width="5.7" height="2.9" fill="#8d9aa6"/><rect x="2468.0" y="225.40" width="11.7" height="2.9" fill="#8d9aa6"/><rect x="2481.5" y="225.40" width="16.2" height="2.9" fill="#8d9aa6"/><rect x="2499.5" y="225.40" width="8.7" height="2.9" fill="#8d9aa6"/><rect x="2415.5" y="229.90" width="1.2" height="2.9" fill="#8d9aa6"/><rect x="2418.5" y="229.90" width="10.2" height="2.9" fill="#8d9aa6"/><rect x="2430.5" y="229.90" width="4.2" height="2.9" fill="#8d9aa6"/><rect x="2436.5" y="229.90" width="2.7" height="2.9" fill="#8d9aa6"/><rect x="2441.0" y="229.90" width="4.2" height="2.9" fill="#8d9aa6"/><rect x="2447.0" y="229.90" width="11.7" height="2.9" fill="#8d9aa6"/><rect x="2460.5" y="229.90" width="2.7" height="2.9" fill="#8d9aa6"/><rect x="2465.0" y="229.90" width="4.2" height="2.9" fill="#8d9aa6"/><rect x="2471.0" y="229.90" width="5.7" height="2.9" fill="#8d9aa6"/><rect x="2478.5" y="229.90" width="10.2" height="2.9" fill="#8d9aa6"/><rect x="2490.5" y="229.90" width="4.2" height="2.9" fill="#8d9aa6"/><rect x="2496.5" y="229.90" width="7.2" height="2.9" fill="#8d9aa6"/><rect x="2505.5" y="229.90" width="11.7" height="2.9" fill="#8d9aa6"/><rect x="2415.5" y="234.40" width="1.2" height="2.9" fill="#8d9aa6"/><rect x="2415.5" y="238.90" width="1.2" height="2.9" fill="#8d9aa6"/><rect x="2418.5" y="238.90" width="19.2" height="2.9" fill="#8d9aa6"/><rect x="2439.5" y="238.90" width="2.7" height="2.9" fill="#8d9aa6"/><rect x="2444.0" y="238.90" width="16.2" height="2.9" fill="#8d9aa6"/><rect x="2462.0" y="238.90" width="2.7" height="2.9" fill="#8d9aa6"/><rect x="2466.5" y="238.90" width="4.2" height="2.9" fill="#8d9aa6"/><rect x="2472.5" y="238.90" width="5.7" height="2.9" fill="#8d9aa6"/><rect x="2480.0" y="238.90" width="5.7" height="2.9" fill="#8d9aa6"/><rect x="2487.5" y="238.90" width="2.7" height="2.9" fill="#8d9aa6"/><rect x="2492.0" y="238.90" width="5.7" height="2.9" fill="#8d9aa6"/><rect x="2499.5" y="238.90" width="2.7" height="2.9" fill="#8d9aa6"/><rect x="2504.0" y="238.90" width="10.2" height="2.9" fill="#8d9aa6"/><rect x="2415.5" y="243.40" width="1.2" height="2.9" fill="#8d9aa6"/><rect x="2418.5" y="243.40" width="4.2" height="2.9" fill="#8d9aa6"/><rect x="2424.5" y="243.40" width="10.2" height="2.9" fill="#8d9aa6"/><rect x="2436.5" y="243.40" width="4.2" height="2.9" fill="#8d9aa6"/><rect x="2442.5" y="243.40" width="13.2" height="2.9" fill="#8d9aa6"/><rect x="2457.5" y="243.40" width="10.2" height="2.9" fill="#8d9aa6"/><rect x="2469.5" y="243.40" width="5.7" height="2.9" fill="#8d9aa6"/><rect x="2477.0" y="243.40" width="4.2" height="2.9" fill="#8d9aa6"/><rect x="2483.0" y="243.40" width="10.2" height="2.9" fill="#8d9aa6"/><rect x="2495.0" y="243.40" width="11.7" height="2.9" fill="#8d9aa6"/><rect x="2508.5" y="243.40" width="2.7" height="2.9" fill="#8d9aa6"/><rect x="2415.5" y="247.90" width="1.2" height="2.9" fill="#8d9aa6"/><rect x="2418.5" y="247.90" width="22.2" height="2.9" fill="#8d9aa6"/><rect x="2442.5" y="247.90" width="2.7" height="2.9" fill="#8d9aa6"/><rect x="2447.0" y="247.90" width="10.2" height="2.9" fill="#8d9aa6"/><rect x="2459.0" y="247.90" width="4.2" height="2.9" fill="#8d9aa6"/><rect x="2465.0" y="247.90" width="1.2" height="2.9" fill="#8d9aa6"/><rect x="2468.0" y="247.90" width="14.7" height="2.9" fill="#8d9aa6"/><rect x="2484.5" y="247.90" width="11.7" height="2.9" fill="#8d9aa6"/><rect x="2499.5" y="247.90" width="4.2" height="2.9" fill="#8d9aa6"/><rect x="2505.5" y="247.90" width="4.2" height="2.9" fill="#8d9aa6"/><rect x="2511.5" y="247.90" width="4.2" height="2.9" fill="#8d9aa6"/><rect x="2415.5" y="252.40" width="1.2" height="2.9" fill="#8d9aa6"/><rect x="2418.5" y="252.40" width="8.7" height="2.9" fill="#8d9aa6"/><rect x="2429.0" y="252.40" width="10.2" height="2.9" fill="#8d9aa6"/><rect x="2441.0" y="252.40" width="8.7" height="2.9" fill="#8d9aa6"/><rect x="2451.5" y="252.40" width="10.2" height="2.9" fill="#8d9aa6"/><rect x="2463.5" y="252.40" width="4.2" height="2.9" fill="#8d9aa6"/><rect x="2469.5" y="252.40" width="5.7" height="2.9" fill="#8d9aa6"/><rect x="2477.0" y="252.40" width="11.7" height="2.9" fill="#8d9aa6"/><rect x="2415.5" y="256.90" width="1.2" height="2.9" fill="#8d9aa6"/><rect x="2415.5" y="261.40" width="1.2" height="2.9" fill="#8d9aa6"/><rect x="2418.5" y="261.40" width="4.2" height="2.9" fill="#8d9aa6"/><rect x="2424.5" y="261.40" width="8.7" height="2.9" fill="#8d9aa6"/><rect x="2435.0" y="261.40" width="5.7" height="2.9" fill="#8d9aa6"/><rect x="2442.5" y="261.40" width="11.7" height="2.9" fill="#8d9aa6"/><rect x="2456.0" y="261.40" width="1.2" height="2.9" fill="#8d9aa6"/><rect x="2459.0" y="261.40" width="5.7" height="2.9" fill="#8d9aa6"/><rect x="2466.5" y="261.40" width="2.7" height="2.9" fill="#8d9aa6"/><rect x="2471.0" y="261.40" width="4.2" height="2.9" fill="#8d9aa6"/><rect x="2477.0" y="261.40" width="4.2" height="2.9" fill="#8d9aa6"/><rect x="2483.0" y="261.40" width="8.7" height="2.9" fill="#8d9aa6"/><rect x="2493.5" y="261.40" width="10.2" height="2.9" fill="#8d9aa6"/><rect x="2505.5" y="261.40" width="8.7" height="2.9" fill="#8d9aa6"/><rect x="2516.0" y="261.40" width="10.2" height="2.9" fill="#8d9aa6"/><rect x="2415.5" y="265.90" width="1.2" height="2.9" fill="#8d9aa6"/><rect x="2418.5" y="265.90" width="7.2" height="2.9" fill="#8d9aa6"/><rect x="2427.5" y="265.90" width="5.7" height="2.9" fill="#8d9aa6"/><rect x="2435.0" y="265.90" width="5.7" height="2.9" fill="#8d9aa6"/><rect x="2442.5" y="265.90" width="11.7" height="2.9" fill="#8d9aa6"/><rect x="2456.0" y="265.90" width="2.7" height="2.9" fill="#8d9aa6"/><rect x="2460.5" y="265.90" width="5.7" height="2.9" fill="#8d9aa6"/><rect x="2468.0" y="265.90" width="4.2" height="2.9" fill="#8d9aa6"/><rect x="2474.0" y="265.90" width="46.2" height="2.9" fill="#8d9aa6"/><rect x="2415.5" y="270.40" width="1.2" height="2.9" fill="#8d9aa6"/><rect x="2415.5" y="274.90" width="1.2" height="2.9" fill="#8d9aa6"/><rect x="2418.5" y="274.90" width="35.7" height="2.9" fill="#8d9aa6"/><rect x="2456.0" y="274.90" width="25.2" height="2.9" fill="#8d9aa6"/><rect x="2415.5" y="279.40" width="2.7" height="2.9" fill="#8d9aa6"/><rect x="2414.0" y="288.40" width="11.7" height="2.9" fill="#8294a6"/><rect x="2427.5" y="288.40" width="14.7" height="2.9" fill="#cf5f0e"/><rect x="2414.0" y="297.40" width="11.7" height="2.9" fill="#8294a6"/><rect x="2427.5" y="297.40" width="44.7" height="2.9" fill="#cf5f0e"/><rect x="2414.0" y="301.90" width="11.7" height="2.9" fill="#8294a6"/><rect x="2427.5" y="301.90" width="52.2" height="2.9" fill="#cf5f0e"/><rect x="2414.0" y="310.90" width="8.7" height="2.9" fill="#1a7db5"/><rect x="2424.5" y="310.90" width="35.7" height="2.9" fill="#5f9e0e"/><rect x="2414.0" y="315.40" width="1.2" height="2.9" fill="#5a5a5a"/><rect x="2426.0" y="319.90" width="13.2" height="2.9" fill="#5f9e0e"/><rect x="2442.5" y="319.90" width="23.7" height="2.9" fill="#5a5a5a"/><rect x="2426.0" y="324.40" width="13.2" height="2.9" fill="#5f9e0e"/><rect x="2441.0" y="324.40" width="10.2" height="2.9" fill="#5a5a5a"/><rect x="2426.0" y="328.90" width="8.7" height="2.9" fill="#5f9e0e"/><rect x="2442.5" y="328.90" width="13.2" height="2.9" fill="#5a5a5a"/><rect x="2414.0" y="333.40" width="2.7" height="2.9" fill="#5a5a5a"/><rect x="2414.0" y="342.40" width="19.2" height="2.9" fill="#8b99a8"/><rect x="2435.0" y="342.40" width="1.2" height="2.9" fill="#5a5a5a"/><rect x="2436.5" y="342.40" width="34.2" height="2.9" fill="#5f9e0e"/><rect x="2471.0" y="342.40" width="1.2" height="2.9" fill="#5a5a5a"/><rect x="2474.0" y="342.40" width="41.7" height="2.9" fill="#5a5a5a"/><rect x="2517.5" y="342.40" width="22.2" height="2.9" fill="#8b99a8"/><rect x="2540.0" y="342.40" width="1.2" height="2.9" fill="#5a5a5a"/><rect x="2414.0" y="351.40" width="8.7" height="2.9" fill="#cc6414"/><rect x="2424.5" y="351.40" width="5.7" height="2.9" fill="#5f9e0e"/><rect x="2414.0" y="355.90" width="61.2" height="2.9" fill="#4588ae"/><rect x="2477.0" y="355.90" width="1.2" height="2.9" fill="#5a5a5a"/><rect x="2478.5" y="355.90" width="13.2" height="2.9" fill="#5f9e0e"/><rect x="2493.5" y="355.90" width="11.7" height="2.9" fill="#5a5a5a"/><rect x="2478.5" y="360.40" width="4.2" height="2.9" fill="#5f9e0e"/><rect x="2495.0" y="360.40" width="8.7" height="2.9" fill="#5a5a5a"/><rect x="2478.5" y="364.90" width="4.2" height="2.9" fill="#5f9e0e"/><rect x="2495.0" y="364.90" width="10.2" height="2.9" fill="#5a5a5a"/><rect x="2478.5" y="369.40" width="4.2" height="2.9" fill="#5f9e0e"/><rect x="2495.0" y="369.40" width="13.2" height="2.9" fill="#5a5a5a"/><rect x="2414.0" y="373.90" width="1.2" height="2.9" fill="#5a5a5a"/><rect x="2426.0" y="378.40" width="34.2" height="2.9" fill="#5f9e0e"/><rect x="2462.0" y="378.40" width="7.2" height="2.9" fill="#5a5a5a"/><rect x="2471.0" y="378.40" width="1.2" height="2.9" fill="#5a5a5a"/><rect x="2474.0" y="378.40" width="1.2" height="2.9" fill="#5a5a5a"/><rect x="2475.5" y="378.40" width="34.2" height="2.9" fill="#5f9e0e"/><rect x="2511.5" y="378.40" width="13.2" height="2.9" fill="#5a5a5a"/><rect x="2426.0" y="387.40" width="11.7" height="2.9" fill="#8b99a8"/><rect x="2439.5" y="387.40" width="1.2" height="2.9" fill="#5a5a5a"/><rect x="2441.0" y="387.40" width="43.2" height="2.9" fill="#4588ae"/><rect x="2486.0" y="387.40" width="11.7" height="2.9" fill="#5a5a5a"/><rect x="2426.0" y="396.40" width="2.7" height="2.9" fill="#1a7db5"/><rect x="2430.5" y="396.40" width="17.7" height="2.9" fill="#5a5a5a"/><rect x="2450.0" y="396.40" width="2.7" height="2.9" fill="#5a5a5a"/><rect x="2454.5" y="396.40" width="5.7" height="2.9" fill="#a3175f"/><rect x="2460.5" y="396.40" width="1.2" height="2.9" fill="#5a5a5a"/><rect x="2426.0" y="400.90" width="1.2" height="2.9" fill="#5a5a5a"/><rect x="2438.0" y="405.40" width="35.7" height="2.9" fill="#4588ae"/><rect x="2475.5" y="405.40" width="19.2" height="2.9" fill="#5a5a5a"/><rect x="2477.0" y="409.90" width="2.7" height="2.9" fill="#5a5a5a"/><rect x="2480.0" y="409.90" width="19.2" height="2.9" fill="#5f9e0e"/><rect x="2499.5" y="409.90" width="1.2" height="2.9" fill="#5a5a5a"/><rect x="2502.5" y="409.90" width="1.2" height="2.9" fill="#5a5a5a"/><rect x="2505.5" y="409.90" width="1.2" height="2.9" fill="#a3175f"/><rect x="2507.0" y="409.90" width="1.2" height="2.9" fill="#5a5a5a"/><rect x="2510.0" y="409.90" width="1.2" height="2.9" fill="#a3175f"/><rect x="2511.5" y="409.90" width="1.2" height="2.9" fill="#5a5a5a"/><rect x="2514.5" y="409.90" width="8.7" height="2.9" fill="#5a5a5a"/><rect x="2525.0" y="409.90" width="8.7" height="2.9" fill="#5a5a5a"/><rect x="2535.5" y="409.90" width="2.7" height="2.9" fill="#5a5a5a"/><rect x="2477.0" y="414.40" width="14.7" height="2.9" fill="#5a5a5a"/><rect x="2426.0" y="418.90" width="1.2" height="2.9" fill="#5a5a5a"/><rect x="2426.0" y="427.90" width="4.2" height="2.9" fill="#1a7db5"/><rect x="2432.0" y="427.90" width="1.2" height="2.9" fill="#5a5a5a"/><rect x="2433.5" y="427.90" width="7.2" height="2.9" fill="#cc6414"/><rect x="2442.5" y="427.90" width="7.2" height="2.9" fill="#5f9e0e"/><rect x="2451.5" y="427.90" width="7.2" height="2.9" fill="#5a5a5a"/><rect x="2460.5" y="427.90" width="1.2" height="2.9" fill="#5a5a5a"/><rect x="2463.5" y="427.90" width="29.7" height="2.9" fill="#5a5a5a"/><rect x="2495.0" y="427.90" width="7.2" height="2.9" fill="#5a5a5a"/><rect x="2504.0" y="427.90" width="5.7" height="2.9" fill="#5a5a5a"/><rect x="2511.5" y="427.90" width="1.2" height="2.9" fill="#5a5a5a"/><rect x="2514.5" y="427.90" width="16.2" height="2.9" fill="#5a5a5a"/><rect x="2426.0" y="432.40" width="1.2" height="2.9" fill="#5a5a5a"/><rect x="2438.0" y="436.90" width="26.7" height="2.9" fill="#5f9e0e"/><rect x="2466.5" y="436.90" width="13.2" height="2.9" fill="#5a5a5a"/><rect x="2481.5" y="436.90" width="1.2" height="2.9" fill="#5a5a5a"/><rect x="2484.5" y="436.90" width="16.2" height="2.9" fill="#5a5a5a"/><rect x="2438.0" y="445.90" width="11.7" height="2.9" fill="#8b99a8"/><rect x="2451.5" y="445.90" width="1.2" height="2.9" fill="#5a5a5a"/><rect x="2453.0" y="445.90" width="34.2" height="2.9" fill="#4588ae"/><rect x="2489.0" y="445.90" width="17.7" height="2.9" fill="#5a5a5a"/><rect x="2438.0" y="454.90" width="28.2" height="2.9" fill="#4588ae"/><rect x="2468.0" y="454.90" width="1.2" height="2.9" fill="#5a5a5a"/><rect x="2469.5" y="454.90" width="16.2" height="2.9" fill="#8b99a8"/><rect x="2487.5" y="454.90" width="17.7" height="2.9" fill="#5a5a5a"/><rect x="2426.0" y="459.40" width="1.2" height="2.9" fill="#5a5a5a"/><rect x="2414.0" y="463.90" width="1.2" height="2.9" fill="#5a5a5a"/><rect x="2414.0" y="472.90" width="8.7" height="2.9" fill="#cc6414"/><rect x="2424.5" y="472.90" width="5.7" height="2.9" fill="#5f9e0e"/><rect x="2414.0" y="477.40" width="52.2" height="2.9" fill="#4588ae"/><rect x="2468.0" y="477.40" width="1.2" height="2.9" fill="#5a5a5a"/><rect x="2469.5" y="477.40" width="13.2" height="2.9" fill="#5f9e0e"/><rect x="2492.0" y="477.40" width="11.7" height="2.9" fill="#5a5a5a"/><rect x="2469.5" y="481.90" width="20.7" height="2.9" fill="#5f9e0e"/><rect x="2493.5" y="481.90" width="17.7" height="2.9" fill="#5a5a5a"/><rect x="2469.5" y="486.40" width="4.2" height="2.9" fill="#5f9e0e"/><rect x="2493.5" y="486.40" width="13.2" height="2.9" fill="#5a5a5a"/><rect x="2469.5" y="490.90" width="4.2" height="2.9" fill="#5f9e0e"/><rect x="2492.0" y="490.90" width="13.2" height="2.9" fill="#5a5a5a"/><rect x="2469.5" y="495.40" width="4.2" height="2.9" fill="#5f9e0e"/><rect x="2492.0" y="495.40" width="13.2" height="2.9" fill="#5a5a5a"/><rect x="2469.5" y="499.90" width="4.2" height="2.9" fill="#5f9e0e"/><rect x="2492.0" y="499.90" width="26.7" height="2.9" fill="#5a5a5a"/><rect x="2469.5" y="504.40" width="4.2" height="2.9" fill="#5f9e0e"/><rect x="2492.0" y="504.40" width="26.7" height="2.9" fill="#5a5a5a"/><rect x="2414.0" y="508.90" width="1.2" height="2.9" fill="#5a5a5a"/><rect x="2426.0" y="513.40" width="34.2" height="2.9" fill="#5f9e0e"/><rect x="2462.0" y="513.40" width="7.2" height="2.9" fill="#5a5a5a"/><rect x="2471.0" y="513.40" width="1.2" height="2.9" fill="#5a5a5a"/><rect x="2474.0" y="513.40" width="1.2" height="2.9" fill="#5a5a5a"/><rect x="2475.5" y="513.40" width="34.2" height="2.9" fill="#5f9e0e"/><rect x="2511.5" y="513.40" width="13.2" height="2.9" fill="#5a5a5a"/><rect x="2426.0" y="522.40" width="11.7" height="2.9" fill="#8b99a8"/><rect x="2439.5" y="522.40" width="1.2" height="2.9" fill="#5a5a5a"/><rect x="2441.0" y="522.40" width="43.2" height="2.9" fill="#4588ae"/><rect x="2486.0" y="522.40" width="11.7" height="2.9" fill="#5a5a5a"/><rect x="2426.0" y="531.40" width="2.7" height="2.9" fill="#1a7db5"/><rect x="2430.5" y="531.40" width="17.7" height="2.9" fill="#5a5a5a"/><rect x="2450.0" y="531.40" width="2.7" height="2.9" fill="#5a5a5a"/><rect x="2454.5" y="531.40" width="5.7" height="2.9" fill="#a3175f"/><rect x="2460.5" y="531.40" width="1.2" height="2.9" fill="#5a5a5a"/><rect x="2426.0" y="535.90" width="1.2" height="2.9" fill="#5a5a5a"/><rect x="2438.0" y="540.40" width="26.7" height="2.9" fill="#4588ae"/><rect x="2466.5" y="540.40" width="19.2" height="2.9" fill="#5a5a5a"/><rect x="2468.0" y="544.90" width="17.7" height="2.9" fill="#5a5a5a"/><rect x="2468.0" y="549.40" width="13.2" height="2.9" fill="#5a5a5a"/><rect x="2468.0" y="553.90" width="11.7" height="2.9" fill="#5a5a5a"/><rect x="2468.0" y="558.40" width="11.7" height="2.9" fill="#5a5a5a"/><rect x="2468.0" y="562.90" width="25.2" height="2.9" fill="#5a5a5a"/><rect x="2468.0" y="567.40" width="26.7" height="2.9" fill="#5a5a5a"/><rect x="2426.0" y="571.90" width="1.2" height="2.9" fill="#5a5a5a"/><rect x="2414.0" y="576.40" width="1.2" height="2.9" fill="#5a5a5a"/><rect x="2414.0" y="585.40" width="8.7" height="2.9" fill="#cc6414"/><rect x="2424.5" y="585.40" width="5.7" height="2.9" fill="#5f9e0e"/><rect x="2414.0" y="589.90" width="52.2" height="2.9" fill="#4588ae"/><rect x="2468.0" y="589.90" width="1.2" height="2.9" fill="#5a5a5a"/><rect x="2469.5" y="589.90" width="10.2" height="2.9" fill="#5f9e0e"/><rect x="2481.5" y="589.90" width="11.7" height="2.9" fill="#5a5a5a"/><rect x="2414.0" y="594.40" width="1.2" height="2.9" fill="#5a5a5a"/><rect x="2426.0" y="598.90" width="34.2" height="2.9" fill="#5f9e0e"/><rect x="2462.0" y="598.90" width="7.2" height="2.9" fill="#5a5a5a"/><rect x="2471.0" y="598.90" width="1.2" height="2.9" fill="#5a5a5a"/><rect x="2474.0" y="598.90" width="1.2" height="2.9" fill="#5a5a5a"/><rect x="2475.5" y="598.90" width="34.2" height="2.9" fill="#5f9e0e"/><rect x="2511.5" y="598.90" width="13.2" height="2.9" fill="#5a5a5a"/><rect x="2426.0" y="607.90" width="11.7" height="2.9" fill="#8b99a8"/><rect x="2439.5" y="607.90" width="1.2" height="2.9" fill="#5a5a5a"/><rect x="2441.0" y="607.90" width="43.2" height="2.9" fill="#4588ae"/><rect x="2486.0" y="607.90" width="11.7" height="2.9" fill="#5a5a5a"/><rect x="2426.0" y="616.90" width="7.2" height="2.9" fill="#1a7db5"/><rect x="2435.0" y="616.90" width="29.7" height="2.9" fill="#5a5a5a"/><rect x="2466.5" y="616.90" width="2.7" height="2.9" fill="#5a5a5a"/><rect x="2471.0" y="616.90" width="5.7" height="2.9" fill="#a3175f"/><rect x="2477.0" y="616.90" width="1.2" height="2.9" fill="#5a5a5a"/><rect x="2426.0" y="621.40" width="1.2" height="2.9" fill="#5a5a5a"/><rect x="2438.0" y="625.90" width="26.7" height="2.9" fill="#5f9e0e"/><rect x="2466.5" y="625.90" width="13.2" height="2.9" fill="#5a5a5a"/><rect x="2481.5" y="625.90" width="1.2" height="2.9" fill="#5a5a5a"/><rect x="2484.5" y="625.90" width="38.7" height="2.9" fill="#5a5a5a"/><rect x="2438.0" y="634.90" width="11.7" height="2.9" fill="#8b99a8"/><rect x="2451.5" y="634.90" width="1.2" height="2.9" fill="#5a5a5a"/><rect x="2453.0" y="634.90" width="34.2" height="2.9" fill="#4588ae"/><rect x="2489.0" y="634.90" width="17.7" height="2.9" fill="#5a5a5a"/><rect x="2438.0" y="643.90" width="50.7" height="2.9" fill="#4588ae"/><rect x="2490.5" y="643.90" width="8.7" height="2.9" fill="#5a5a5a"/><rect x="2501.0" y="643.90" width="14.7" height="2.9" fill="#5a5a5a"/><rect x="2426.0" y="648.40" width="1.2" height="2.9" fill="#5a5a5a"/><rect x="2426.0" y="657.40" width="22.2" height="2.9" fill="#8b99a8"/><rect x="2450.0" y="657.40" width="20.7" height="2.9" fill="#5a5a5a"/><rect x="2472.5" y="657.40" width="28.2" height="2.9" fill="#4588ae"/><rect x="2501.0" y="657.40" width="2.7" height="2.9" fill="#5a5a5a"/><rect x="2426.0" y="666.40" width="20.7" height="2.9" fill="#8b99a8"/><rect x="2448.5" y="666.40" width="76.2" height="2.9" fill="#5a5a5a"/><rect x="2526.5" y="666.40" width="13.2" height="2.9" fill="#5a5a5a"/><rect x="2414.0" y="670.90" width="1.2" height="2.9" fill="#5a5a5a"/><rect x="2414.0" y="679.90" width="8.7" height="2.9" fill="#cc6414"/><rect x="2424.5" y="679.90" width="5.7" height="2.9" fill="#5f9e0e"/><rect x="2414.0" y="684.40" width="56.7" height="2.9" fill="#4588ae"/><rect x="2472.5" y="684.40" width="1.2" height="2.9" fill="#5a5a5a"/><rect x="2474.0" y="684.40" width="41.7" height="2.9" fill="#5f9e0e"/><rect x="2517.5" y="684.40" width="10.2" height="2.9" fill="#5a5a5a"/><rect x="2414.0" y="688.90" width="1.2" height="2.9" fill="#5a5a5a"/><rect x="2426.0" y="693.40" width="17.7" height="2.9" fill="#5f9e0e"/><rect x="2445.5" y="693.40" width="19.2" height="2.9" fill="#5a5a5a"/><rect x="2466.5" y="693.40" width="1.2" height="2.9" fill="#5a5a5a"/><rect x="2469.5" y="693.40" width="20.7" height="2.9" fill="#8b99a8"/><rect x="2492.0" y="693.40" width="11.7" height="2.9" fill="#5a5a5a"/><rect x="2426.0" y="697.90" width="20.7" height="2.9" fill="#5f9e0e"/><rect x="2448.5" y="697.90" width="19.2" height="2.9" fill="#5a5a5a"/><rect x="2469.5" y="697.90" width="1.2" height="2.9" fill="#5a5a5a"/><rect x="2472.5" y="697.90" width="23.7" height="2.9" fill="#8b99a8"/><rect x="2498.0" y="697.90" width="11.7" height="2.9" fill="#5a5a5a"/><rect x="2426.0" y="706.90" width="31.2" height="2.9" fill="#5a5a5a"/><rect x="2459.0" y="706.90" width="1.2" height="2.9" fill="#5a5a5a"/><rect x="2462.0" y="706.90" width="52.2" height="2.9" fill="#4588ae"/><rect x="2514.5" y="706.90" width="1.2" height="2.9" fill="#5a5a5a"/><rect x="2426.0" y="715.90" width="40.2" height="2.9" fill="#5a5a5a"/><rect x="2468.0" y="715.90" width="1.2" height="2.9" fill="#5a5a5a"/><rect x="2471.0" y="715.90" width="61.2" height="2.9" fill="#4588ae"/><rect x="2532.5" y="715.90" width="1.2" height="2.9" fill="#5a5a5a"/><rect x="2426.0" y="720.40" width="31.2" height="2.9" fill="#5a5a5a"/><rect x="2459.0" y="720.40" width="1.2" height="2.9" fill="#5a5a5a"/><rect x="2462.0" y="720.40" width="52.2" height="2.9" fill="#4588ae"/><rect x="2514.5" y="720.40" width="1.2" height="2.9" fill="#5a5a5a"/><rect x="2414.0" y="724.90" width="1.2" height="2.9" fill="#5a5a5a"/><rect x="2414.0" y="733.90" width="8.7" height="2.9" fill="#cc6414"/><rect x="2424.5" y="733.90" width="5.7" height="2.9" fill="#5f9e0e"/><rect x="2414.0" y="738.40" width="47.7" height="2.9" fill="#4588ae"/><rect x="2463.5" y="738.40" width="1.2" height="2.9" fill="#5a5a5a"/><rect x="2465.0" y="738.40" width="34.2" height="2.9" fill="#5f9e0e"/><rect x="2501.0" y="738.40" width="8.7" height="2.9" fill="#5a5a5a"/><rect x="2414.0" y="742.90" width="1.2" height="2.9" fill="#5a5a5a"/><rect x="2414.0" y="747.40" width="1.2" height="2.9" fill="#5a5a5a"/><rect x="2414.0" y="756.40" width="34.2" height="2.9" fill="#5f9e0e"/><rect x="2450.0" y="756.40" width="1.2" height="2.9" fill="#5a5a5a"/><rect x="2414.0" y="760.90" width="46.2" height="2.9" fill="#4588ae"/><rect x="2462.0" y="760.90" width="1.2" height="2.9" fill="#5a5a5a"/><rect x="2463.5" y="760.90" width="5.7" height="2.9" fill="#5f9e0e"/><rect x="2469.5" y="760.90" width="1.2" height="2.9" fill="#5a5a5a"/><rect x="2414.0" y="765.40" width="1.2" height="2.9" fill="#5a5a5a"/><rect x="2426.0" y="769.90" width="8.7" height="2.9" fill="#1a7db5"/><rect x="2436.5" y="769.90" width="17.7" height="2.9" fill="#4588ae"/><rect x="2456.0" y="769.90" width="1.2" height="2.9" fill="#5a5a5a"/><rect x="2457.5" y="769.90" width="46.2" height="2.9" fill="#8b99a8"/><rect x="2504.0" y="769.90" width="1.2" height="2.9" fill="#5a5a5a"/><rect x="2507.0" y="769.90" width="5.7" height="2.9" fill="#a3175f"/><rect x="2513.0" y="769.90" width="2.7" height="2.9" fill="#5a5a5a"/><rect x="2414.0" y="774.40" width="1.2" height="2.9" fill="#5a5a5a"/><rect x="2414.0" y="783.40" width="5.7" height="2.9" fill="#5f9e0e"/><rect x="2414.0" y="787.90" width="47.7" height="2.9" fill="#4588ae"/><rect x="2463.5" y="787.90" width="1.2" height="2.9" fill="#5a5a5a"/><rect x="2465.0" y="787.90" width="34.2" height="2.9" fill="#5f9e0e"/><rect x="2501.0" y="787.90" width="8.7" height="2.9" fill="#5a5a5a"/><rect x="2414.0" y="792.40" width="1.2" height="2.9" fill="#5a5a5a"/><rect x="2426.0" y="796.90" width="23.7" height="2.9" fill="#8b99a8"/><rect x="2451.5" y="796.90" width="1.2" height="2.9" fill="#5a5a5a"/><rect x="2453.0" y="796.90" width="43.2" height="2.9" fill="#4588ae"/><rect x="2498.0" y="796.90" width="11.7" height="2.9" fill="#5a5a5a"/><rect x="2426.0" y="805.90" width="4.2" height="2.9" fill="#1a7db5"/><rect x="2432.0" y="805.90" width="1.2" height="2.9" fill="#5a5a5a"/><rect x="2433.5" y="805.90" width="7.2" height="2.9" fill="#cc6414"/><rect x="2442.5" y="805.90" width="7.2" height="2.9" fill="#5f9e0e"/><rect x="2451.5" y="805.90" width="7.2" height="2.9" fill="#5a5a5a"/><rect x="2460.5" y="805.90" width="1.2" height="2.9" fill="#5a5a5a"/><rect x="2463.5" y="805.90" width="29.7" height="2.9" fill="#5a5a5a"/><rect x="2495.0" y="805.90" width="7.2" height="2.9" fill="#5a5a5a"/><rect x="2504.0" y="805.90" width="5.7" height="2.9" fill="#5a5a5a"/><rect x="2511.5" y="805.90" width="1.2" height="2.9" fill="#5a5a5a"/><rect x="2514.5" y="805.90" width="16.2" height="2.9" fill="#5a5a5a"/><rect x="2426.0" y="810.40" width="1.2" height="2.9" fill="#5a5a5a"/><rect x="2438.0" y="814.90" width="26.7" height="2.9" fill="#5f9e0e"/><rect x="2466.5" y="814.90" width="13.2" height="2.9" fill="#5a5a5a"/><rect x="2481.5" y="814.90" width="1.2" height="2.9" fill="#5a5a5a"/><rect x="2484.5" y="814.90" width="16.2" height="2.9" fill="#5a5a5a"/><rect x="2438.0" y="823.90" width="11.7" height="2.9" fill="#8b99a8"/><rect x="2451.5" y="823.90" width="1.2" height="2.9" fill="#5a5a5a"/><rect x="2453.0" y="823.90" width="34.2" height="2.9" fill="#4588ae"/><rect x="2489.0" y="823.90" width="17.7" height="2.9" fill="#5a5a5a"/><rect x="2438.0" y="828.40" width="11.7" height="2.9" fill="#8b99a8"/><rect x="2451.5" y="828.40" width="1.2" height="2.9" fill="#5a5a5a"/><rect x="2453.0" y="828.40" width="20.7" height="2.9" fill="#8b99a8"/><rect x="2475.5" y="828.40" width="17.7" height="2.9" fill="#5a5a5a"/><rect x="2438.0" y="837.40" width="28.2" height="2.9" fill="#4588ae"/><rect x="2468.0" y="837.40" width="1.2" height="2.9" fill="#5a5a5a"/><rect x="2469.5" y="837.40" width="16.2" height="2.9" fill="#8b99a8"/><rect x="2487.5" y="837.40" width="17.7" height="2.9" fill="#5a5a5a"/><rect x="2426.0" y="841.90" width="1.2" height="2.9" fill="#5a5a5a"/><rect x="2414.0" y="846.40" width="1.2" height="2.9" fill="#5a5a5a"/><rect x="2414.0" y="855.40" width="5.7" height="2.9" fill="#5f9e0e"/><rect x="2414.0" y="859.90" width="50.7" height="2.9" fill="#4588ae"/><rect x="2466.5" y="859.90" width="1.2" height="2.9" fill="#5a5a5a"/><rect x="2468.0" y="859.90" width="34.2" height="2.9" fill="#5f9e0e"/><rect x="2504.0" y="859.90" width="8.7" height="2.9" fill="#5a5a5a"/><rect x="2468.0" y="864.40" width="26.7" height="2.9" fill="#5f9e0e"/><rect x="2504.0" y="864.40" width="10.2" height="2.9" fill="#5a5a5a"/><rect x="2414.0" y="868.90" width="1.2" height="2.9" fill="#5a5a5a"/><rect x="2426.0" y="873.40" width="23.7" height="2.9" fill="#8b99a8"/><rect x="2451.5" y="873.40" width="1.2" height="2.9" fill="#5a5a5a"/><rect x="2453.0" y="873.40" width="43.2" height="2.9" fill="#4588ae"/><rect x="2498.0" y="873.40" width="11.7" height="2.9" fill="#5a5a5a"/><rect x="2426.0" y="877.90" width="23.7" height="2.9" fill="#8b99a8"/><rect x="2451.5" y="877.90" width="1.2" height="2.9" fill="#5a5a5a"/><rect x="2453.0" y="877.90" width="34.2" height="2.9" fill="#4588ae"/><rect x="2489.0" y="877.90" width="13.2" height="2.9" fill="#5a5a5a"/><rect x="2426.0" y="886.90" width="2.7" height="2.9" fill="#1a7db5"/><rect x="2430.5" y="886.90" width="1.2" height="2.9" fill="#5a5a5a"/><rect x="2432.0" y="886.90" width="20.7" height="2.9" fill="#4588ae"/><rect x="2454.5" y="886.90" width="25.2" height="2.9" fill="#5a5a5a"/><rect x="2481.5" y="886.90" width="10.2" height="2.9" fill="#5a5a5a"/><rect x="2426.0" y="891.40" width="1.2" height="2.9" fill="#5a5a5a"/><rect x="2438.0" y="895.90" width="28.2" height="2.9" fill="#4588ae"/><rect x="2468.0" y="895.90" width="1.2" height="2.9" fill="#5a5a5a"/><rect x="2469.5" y="895.90" width="14.7" height="2.9" fill="#8b99a8"/><rect x="2486.0" y="895.90" width="13.2" height="2.9" fill="#5a5a5a"/><rect x="2438.0" y="900.40" width="20.7" height="2.9" fill="#4588ae"/><rect x="2460.5" y="900.40" width="11.7" height="2.9" fill="#5a5a5a"/><rect x="2426.0" y="904.90" width="1.2" height="2.9" fill="#5a5a5a"/><rect x="2414.0" y="909.40" width="1.2" height="2.9" fill="#5a5a5a"/><rect x="2414.0" y="918.40" width="5.7" height="2.9" fill="#5f9e0e"/><rect x="2414.0" y="922.90" width="50.7" height="2.9" fill="#4588ae"/><rect x="2466.5" y="922.90" width="1.2" height="2.9" fill="#5a5a5a"/><rect x="2468.0" y="922.90" width="34.2" height="2.9" fill="#5f9e0e"/><rect x="2504.0" y="922.90" width="8.7" height="2.9" fill="#5a5a5a"/><rect x="2468.0" y="927.40" width="26.7" height="2.9" fill="#5f9e0e"/><rect x="2504.0" y="927.40" width="10.2" height="2.9" fill="#5a5a5a"/><rect x="2414.0" y="931.90" width="1.2" height="2.9" fill="#5a5a5a"/><rect x="2426.0" y="936.40" width="23.7" height="2.9" fill="#8b99a8"/><rect x="2451.5" y="936.40" width="1.2" height="2.9" fill="#5a5a5a"/><rect x="2453.0" y="936.40" width="43.2" height="2.9" fill="#4588ae"/><rect x="2498.0" y="936.40" width="11.7" height="2.9" fill="#5a5a5a"/><rect x="2426.0" y="940.90" width="23.7" height="2.9" fill="#8b99a8"/><rect x="2451.5" y="940.90" width="1.2" height="2.9" fill="#5a5a5a"/><rect x="2453.0" y="940.90" width="34.2" height="2.9" fill="#4588ae"/><rect x="2489.0" y="940.90" width="13.2" height="2.9" fill="#5a5a5a"/><rect x="2426.0" y="945.40" width="23.7" height="2.9" fill="#8b99a8"/><rect x="2451.5" y="945.40" width="1.2" height="2.9" fill="#5a5a5a"/><rect x="2453.0" y="945.40" width="31.2" height="2.9" fill="#4588ae"/><rect x="2486.0" y="945.40" width="1.2" height="2.9" fill="#5a5a5a"/><rect x="2487.5" y="945.40" width="14.7" height="2.9" fill="#8b99a8"/><rect x="2504.0" y="945.40" width="11.7" height="2.9" fill="#5a5a5a"/><rect x="2517.5" y="945.40" width="2.7" height="2.9" fill="#5a5a5a"/><rect x="2522.0" y="945.40" width="5.7" height="2.9" fill="#a3175f"/><rect x="2528.0" y="945.40" width="2.7" height="2.9" fill="#5a5a5a"/><rect x="2426.0" y="954.40" width="25.2" height="2.9" fill="#4588ae"/><rect x="2453.0" y="954.40" width="25.2" height="2.9" fill="#5a5a5a"/><rect x="2480.0" y="954.40" width="25.2" height="2.9" fill="#4588ae"/><rect x="2507.0" y="954.40" width="13.2" height="2.9" fill="#5a5a5a"/><rect x="2426.0" y="958.90" width="31.2" height="2.9" fill="#4588ae"/><rect x="2459.0" y="958.90" width="1.2" height="2.9" fill="#5a5a5a"/><rect x="2460.5" y="958.90" width="14.7" height="2.9" fill="#8b99a8"/><rect x="2477.0" y="958.90" width="11.7" height="2.9" fill="#5a5a5a"/><rect x="2490.5" y="958.90" width="14.7" height="2.9" fill="#8b99a8"/><rect x="2507.0" y="958.90" width="11.7" height="2.9" fill="#5a5a5a"/><rect x="2426.0" y="967.90" width="2.7" height="2.9" fill="#1a7db5"/><rect x="2430.5" y="967.90" width="1.2" height="2.9" fill="#5a5a5a"/><rect x="2432.0" y="967.90" width="32.7" height="2.9" fill="#4588ae"/><rect x="2466.5" y="967.90" width="1.2" height="2.9" fill="#5a5a5a"/><rect x="2468.0" y="967.90" width="14.7" height="2.9" fill="#8b99a8"/><rect x="2484.5" y="967.90" width="11.7" height="2.9" fill="#5a5a5a"/><rect x="2426.0" y="972.40" width="1.2" height="2.9" fill="#5a5a5a"/><rect x="2438.0" y="976.90" width="28.2" height="2.9" fill="#4588ae"/><rect x="2468.0" y="976.90" width="1.2" height="2.9" fill="#5a5a5a"/><rect x="2469.5" y="976.90" width="16.2" height="2.9" fill="#8b99a8"/><rect x="2487.5" y="976.90" width="13.2" height="2.9" fill="#5a5a5a"/><rect x="2426.0" y="981.40" width="1.2" height="2.9" fill="#5a5a5a"/><rect x="2414.0" y="985.90" width="1.2" height="2.9" fill="#5a5a5a"/><rect x="2414.0" y="994.90" width="5.7" height="2.9" fill="#5f9e0e"/><rect x="2414.0" y="999.40" width="55.2" height="2.9" fill="#4588ae"/><rect x="2471.0" y="999.40" width="1.2" height="2.9" fill="#5a5a5a"/><rect x="2472.5" y="999.40" width="34.2" height="2.9" fill="#5f9e0e"/><rect x="2508.5" y="999.40" width="8.7" height="2.9" fill="#5a5a5a"/><rect x="2472.5" y="1003.90" width="13.2" height="2.9" fill="#5f9e0e"/><rect x="2508.5" y="1003.90" width="10.2" height="2.9" fill="#5a5a5a"/><rect x="2414.0" y="1008.40" width="1.2" height="2.9" fill="#5a5a5a"/><rect x="2426.0" y="1012.90" width="23.7" height="2.9" fill="#8b99a8"/><rect x="2451.5" y="1012.90" width="1.2" height="2.9" fill="#5a5a5a"/><rect x="2453.0" y="1012.90" width="43.2" height="2.9" fill="#4588ae"/><rect x="2498.0" y="1012.90" width="11.7" height="2.9" fill="#5a5a5a"/><rect x="2426.0" y="1017.40" width="23.7" height="2.9" fill="#8b99a8"/><rect x="2451.5" y="1017.40" width="1.2" height="2.9" fill="#5a5a5a"/><rect x="2453.0" y="1017.40" width="19.2" height="2.9" fill="#8b99a8"/><rect x="2474.0" y="1017.40" width="13.2" height="2.9" fill="#5a5a5a"/><rect x="2426.0" y="1026.40" width="2.7" height="2.9" fill="#1a7db5"/><rect x="2430.5" y="1026.40" width="8.7" height="2.9" fill="#5a5a5a"/><rect x="2441.0" y="1026.40" width="2.7" height="2.9" fill="#5a5a5a"/><rect x="2445.5" y="1026.40" width="17.7" height="2.9" fill="#5a5a5a"/><rect x="2426.0" y="1030.90" width="1.2" height="2.9" fill="#5a5a5a"/><rect x="2438.0" y="1035.40" width="8.7" height="2.9" fill="#1a7db5"/><rect x="2447.0" y="1035.40" width="1.2" height="2.9" fill="#5a5a5a"/><rect x="2426.0" y="1039.90" width="1.2" height="2.9" fill="#5a5a5a"/><rect x="2426.0" y="1048.90" width="22.2" height="2.9" fill="#8b99a8"/><rect x="2450.0" y="1048.90" width="20.7" height="2.9" fill="#5a5a5a"/><rect x="2472.5" y="1048.90" width="28.2" height="2.9" fill="#4588ae"/><rect x="2501.0" y="1048.90" width="2.7" height="2.9" fill="#5a5a5a"/><rect x="2426.0" y="1057.90" width="2.7" height="2.9" fill="#1a7db5"/><rect x="2430.5" y="1057.90" width="8.7" height="2.9" fill="#5a5a5a"/><rect x="2441.0" y="1057.90" width="2.7" height="2.9" fill="#5a5a5a"/><rect x="2445.5" y="1057.90" width="5.7" height="2.9" fill="#a3175f"/><rect x="2451.5" y="1057.90" width="1.2" height="2.9" fill="#5a5a5a"/><rect x="2426.0" y="1062.40" width="1.2" height="2.9" fill="#5a5a5a"/><rect x="2438.0" y="1066.90" width="16.2" height="2.9" fill="#5a5a5a"/><rect x="2456.0" y="1066.90" width="1.2" height="2.9" fill="#5a5a5a"/><rect x="2459.0" y="1066.90" width="8.7" height="2.9" fill="#5a5a5a"/><rect x="2438.0" y="1071.40" width="31.2" height="2.9" fill="#4588ae"/><rect x="2471.0" y="1071.40" width="10.2" height="2.9" fill="#5a5a5a"/><rect x="2483.0" y="1071.40" width="14.7" height="2.9" fill="#8b99a8"/><rect x="2499.5" y="1071.40" width="11.7" height="2.9" fill="#5a5a5a"/><rect x="2426.0" y="1075.90" width="1.2" height="2.9" fill="#5a5a5a"/><rect x="2426.0" y="1084.90" width="34.2" height="2.9" fill="#4588ae"/><rect x="2462.0" y="1084.90" width="1.2" height="2.9" fill="#5a5a5a"/><rect x="2463.5" y="1084.90" width="14.7" height="2.9" fill="#8b99a8"/><rect x="2480.0" y="1084.90" width="11.7" height="2.9" fill="#5a5a5a"/><rect x="2414.0" y="1089.40" width="1.2" height="2.9" fill="#5a5a5a"/><rect x="2414.0" y="1098.40" width="7.2" height="2.9" fill="#cc6414"/><rect x="2423.0" y="1098.40" width="7.2" height="2.9" fill="#5f9e0e"/><rect x="2432.0" y="1098.40" width="1.2" height="2.9" fill="#5a5a5a"/><rect x="2414.0" y="1102.90" width="59.7" height="2.9" fill="#4588ae"/><rect x="2475.5" y="1102.90" width="1.2" height="2.9" fill="#5a5a5a"/><rect x="2477.0" y="1102.90" width="34.2" height="2.9" fill="#5f9e0e"/><rect x="2513.0" y="1102.90" width="8.7" height="2.9" fill="#5a5a5a"/><rect x="2414.0" y="1107.40" width="1.2" height="2.9" fill="#5a5a5a"/><rect x="2426.0" y="1111.90" width="29.7" height="2.9" fill="#8b99a8"/><rect x="2457.5" y="1111.90" width="1.2" height="2.9" fill="#5a5a5a"/><rect x="2459.0" y="1111.90" width="43.2" height="2.9" fill="#4588ae"/><rect x="2504.0" y="1111.90" width="10.2" height="2.9" fill="#5a5a5a"/><rect x="2516.0" y="1111.90" width="5.7" height="2.9" fill="#a3175f"/><rect x="2522.0" y="1111.90" width="2.7" height="2.9" fill="#5a5a5a"/><rect x="2426.0" y="1120.90" width="8.7" height="2.9" fill="#1a7db5"/><rect x="2436.5" y="1120.90" width="29.7" height="2.9" fill="#5a5a5a"/><rect x="2414.0" y="1125.40" width="1.2" height="2.9" fill="#5a5a5a"/></svg>
<svg class="i" style="left:551.0px;top:1163.0px;width:24px;height:24px;color:#505050;" viewBox="0 0 24 24"><circle cx="12" cy="12" r="10.300" stroke="currentColor" fill="none" stroke-width="3"/><circle cx="12" cy="7.600" r="1.800"/><path d="M10.400 10.700h3.200v7h-3.200z"/></svg>
<svg class="i" style="left:551.0px;top:1233.0px;width:24px;height:21px;color:#505050;" viewBox="0 0 24 21"><rect x="1.500" y="1.500" width="21" height="18" rx="3" stroke="currentColor" fill="none" stroke-width="3"/><path d="M5.500 7.500l4 3.300-4 3.300" stroke="currentColor" fill="none" stroke-width="2.600" stroke-linecap="round" stroke-linejoin="round"/><path d="M11.500 14.300h5.500v2.400h-5.500z"/></svg>
<svg class="i" style="left:556.9px;top:1304.7px;width:13.7px;height:15.6px;color:#505050;" viewBox="0 0 16 19"><path d="M.800 1.200v16.600q0 1.200 1 .6l13.200-8.300q.800-.600 0-1.200L1.800.600q-1-.600-1 .600z"/></svg>
<div class="b" style="left:538px;top:1350px;width:50px;height:60px;background:#e4e4e4;border-radius:9px;"></div>
<svg class="i" style="left:554.0px;top:1368.0px;width:18.2px;height:24px;color:#2e2e2e;" viewBox="0 0 18.2 24"><path d="M9.100 1.500a7.500 7.500 0 0 0-4.300 13.700q1.200.900 1.200 2.300h6.200q0-1.400 1.200-2.300A7.500 7.500 0 0 0 9.100 1.500z" stroke="currentColor" fill="none" stroke-width="3"/><path d="M5 19.200h8.200v2H5z M6.200 22h5.800v2H6.200z"/><path d="M7 9.300l2.100 2.300 2.100-2.300" stroke="currentColor" fill="none" stroke-width="1.200" opacity=".45"/></svg>
<svg class="i" style="left:550.9px;top:1435.4px;width:24px;height:24px;color:#505050;" viewBox="0 0 24 24"><circle cx="12" cy="12" r="9.200" stroke="currentColor" fill="none" stroke-width="3"/><path d="M12 12V6.300A5.700 5.700 0 0 0 6.300 12z M12 12v5.700A5.700 5.700 0 0 0 17.700 12z"/></svg>
<svg class="i" style="left:556.9px;top:1503.0px;width:10.6px;height:24px;color:#505050;" viewBox="0 0 10.6 24"><path d="M3.500 0h3.600v2.400H3.500z M2.300 3.200h6l2 3.800H.300z M0 8.200h10.600V22q0 2-2 2H2q-2 0-2-2z"/><path d="M6.600 11h1.800v10.500H1v-1.800h5.600z" fill="#fafafa"/></svg>
<svg class="i" style="left:551.4px;top:1571.7px;width:24px;height:23px;color:#505050;" viewBox="0 0 25 24"><circle cx="10" cy="10" r="8.300" stroke="currentColor" fill="none" stroke-width="3"/><path d="M16 16l7.200 6.800" stroke="currentColor" fill="none" stroke-width="3.400" stroke-linecap="round"/></svg>
<span class="t" style="left:605.5px;top:1151px;font-size:18px;font-weight:700;color:#b2b2b2;letter-spacing:-0.49px;">Time</span>
<span class="t" style="left:749.6px;top:1151px;font-size:18px;font-weight:700;color:#b2b2b2;letter-spacing:-0.56px;">Severity</span>
<span class="t" style="left:855.9px;top:1151px;font-size:18px;font-weight:700;color:#b2b2b2;letter-spacing:-0.57px;">Section</span>
<span class="t" style="left:1071.4px;top:1151px;font-size:18px;font-weight:700;color:#b2b2b2;letter-spacing:-0.61px;">Message</span>
<span class="t" style="left:606.0px;top:1188px;font-size:22px;color:#4e4e52;letter-spacing:-0.85px;">05:52:11 PM</span>
<span class="t" style="left:749.0px;top:1188px;font-size:22px;color:#4e4e52;letter-spacing:-0.59px;">Message</span>
<span class="t" style="left:855.4px;top:1188px;font-size:22px;color:#4e4e52;letter-spacing:0.35px;">ide-workbench</span>
<span class="t" style="left:1071.3px;top:1188px;font-size:22px;color:#4e4e52;letter-spacing:0.17px;">Loading project “gtksourceview”</span>
<span class="t" style="left:606.0px;top:1221px;font-size:22px;color:#4e4e52;letter-spacing:-0.76px;">05:52:12 PM</span>
<span class="t" style="left:749.0px;top:1221px;font-size:22px;color:#4e4e52;letter-spacing:-0.59px;">Message</span>
<span class="t" style="left:855.4px;top:1221px;font-size:22px;color:#4e4e52;letter-spacing:0.38px;">ide-config-manager</span>
<span class="t" style="left:1072.3px;top:1221px;font-size:22px;color:#4e4e52;letter-spacing:0.21px;">Active configuration set to “default”</span>
<span class="t" style="left:606.0px;top:1254px;font-size:22px;color:#4e4e52;letter-spacing:-0.76px;">05:52:12 PM</span>
<span class="t" style="left:749.0px;top:1254px;font-size:22px;color:#4e4e52;letter-spacing:-0.59px;">Message</span>
<span class="t" style="left:855.4px;top:1254px;font-size:22px;color:#4e4e52;letter-spacing:0.38px;">ide-config-manager</span>
<span class="t" style="left:1072.3px;top:1254px;font-size:22px;color:#4e4e52;letter-spacing:0.15px;">Active configuration set to “org.gnome.GtkSourceView.TestWidget.json”</span>
<span class="t" style="left:606.0px;top:1287px;font-size:22px;color:#4e4e52;letter-spacing:-0.76px;">05:52:12 PM</span>
<span class="t" style="left:749.0px;top:1287px;font-size:22px;color:#4e4e52;letter-spacing:-0.59px;">Message</span>
<span class="t" style="left:855.4px;top:1287px;font-size:22px;color:#4e4e52;letter-spacing:0.35px;">ide-workbench</span>
<span class="t" style="left:1071.3px;top:1287px;font-size:22px;color:#4e4e52;letter-spacing:0.02px;">Project loaded</span>
<span class="t" style="left:606.0px;top:1320px;font-size:22px;color:#4e4e52;letter-spacing:-0.68px;">05:52:15 PM</span>
<span class="t" style="left:749.0px;top:1320px;font-size:22px;color:#4e4e52;letter-spacing:-0.59px;">Message</span>
<span class="t" style="left:855.4px;top:1320px;font-size:22px;color:#4e4e52;letter-spacing:0.35px;">ide-pipeline</span>
<span class="t" style="left:1071.3px;top:1320px;font-size:22px;color:#4e4e52;letter-spacing:0.11px;">Pipeline started</span>
<span class="t" style="left:606.0px;top:1353px;font-size:22px;color:#4e4e52;letter-spacing:-0.57px;">05:52:19 PM</span>
<span class="t" style="left:749.0px;top:1353px;font-size:22px;color:#4e4e52;letter-spacing:-0.59px;">Message</span>
<span class="t" style="left:855.4px;top:1353px;font-size:22px;color:#4e4e52;letter-spacing:0.35px;">ide-pipeline</span>
<span class="t" style="left:1071.3px;top:1353px;font-size:22px;color:#4e4e52;letter-spacing:0.05px;">Pipeline finished</span>
<span class="t" style="left:606.0px;top:1386px;font-size:22px;color:#4e4e52;letter-spacing:-0.17px;">05:52:48 PM</span>
<span class="t" style="left:749.0px;top:1386px;font-size:22px;color:#4e4e52;letter-spacing:-0.59px;">Message</span>
<span class="t" style="left:855.4px;top:1386px;font-size:22px;color:#4e4e52;letter-spacing:0.35px;">ide-pipeline</span>
<span class="t" style="left:1071.3px;top:1386px;font-size:22px;color:#4e4e52;letter-spacing:0.11px;">Pipeline started</span>
<span class="t" style="left:606.0px;top:1419px;font-size:22px;color:#4e4e52;letter-spacing:-0.17px;">05:52:49 PM</span>
<span class="t" style="left:749.0px;top:1419px;font-size:22px;color:#4e4e52;letter-spacing:-0.59px;">Message</span>
<span class="t" style="left:855.4px;top:1419px;font-size:22px;color:#4e4e52;letter-spacing:0.35px;">ide-pipeline</span>
<span class="t" style="left:1071.3px;top:1419px;font-size:22px;color:#4e4e52;letter-spacing:0.05px;">Pipeline finished</span>
<span class="t" style="left:606.0px;top:1452px;font-size:22px;color:#4e4e52;letter-spacing:-0.40px;">05:52:52 PM</span>
<span class="t" style="left:749.0px;top:1452px;font-size:22px;color:#4e4e52;letter-spacing:-0.59px;">Message</span>
<span class="t" style="left:856.4px;top:1452px;font-size:22px;color:#4e4e52;letter-spacing:0.60px;">gbp-sysprof-tool</span>
<span class="t" style="left:1071.3px;top:1452px;font-size:22px;color:#4e4e52;letter-spacing:-0.33px;">Sysprof: Created process 7</span>
<span class="t" style="left:606.0px;top:1485px;font-size:22px;color:#4e4e52;letter-spacing:-0.40px;">05:52:57 PM</span>
<span class="t" style="left:749.0px;top:1485px;font-size:22px;color:#4e4e52;letter-spacing:-0.59px;">Message</span>
<span class="t" style="left:856.4px;top:1485px;font-size:22px;color:#4e4e52;letter-spacing:0.60px;">gbp-sysprof-tool</span>
<span class="t" style="left:1071.3px;top:1485px;font-size:22px;color:#4e4e52;letter-spacing:-0.33px;">Sysprof: Process 7 exited</span>
<span class="t" style="left:606.0px;top:1518px;font-size:22px;color:#4e4e52;letter-spacing:-0.40px;">05:52:57 PM</span>
<span class="t" style="left:749.0px;top:1518px;font-size:22px;color:#4e4e52;letter-spacing:-0.59px;">Message</span>
<span class="t" style="left:856.4px;top:1518px;font-size:22px;color:#4e4e52;letter-spacing:0.60px;">gbp-sysprof-tool</span>
<span class="t" style="left:1071.3px;top:1518px;font-size:22px;color:#4e4e52;letter-spacing:-0.04px;">Sysprof: Extracting symbols and attaching to capture</span>
<span class="t" style="left:606.0px;top:1551px;font-size:22px;color:#4e4e52;letter-spacing:-0.45px;">05:53:01 PM</span>
<span class="t" style="left:749.0px;top:1551px;font-size:22px;color:#4e4e52;letter-spacing:-0.59px;">Message</span>
<span class="t" style="left:856.4px;top:1551px;font-size:22px;color:#4e4e52;letter-spacing:0.60px;">gbp-sysprof-tool</span>
<span class="t" style="left:1071.3px;top:1551px;font-size:22px;color:#4e4e52;letter-spacing:0.10px;">Sysprof: Completing symbol extraction</span>
<span class="t" style="left:606.0px;top:1584px;font-size:22px;color:#4e4e52;letter-spacing:-0.45px;">05:53:01 PM</span>
<span class="t" style="left:749.0px;top:1584px;font-size:22px;color:#4e4e52;letter-spacing:-0.59px;">Message</span>
<span class="t" style="left:855.4px;top:1584px;font-size:22px;color:#4e4e52;letter-spacing:0.39px;">ide-run-manager</span>
<span class="t" style="left:1072.3px;top:1584px;font-size:22px;color:#4e4e52;letter-spacing:0.11px;">Application exited</span>
<svg class="i" style="left:95.0px;top:1629.4px;width:20px;height:21px;color:#4a4a4a;" viewBox="0 0 20 21"><circle cx="3.500" cy="3.500" r="2.400" stroke="currentColor" fill="none" stroke-width="2"/><path d="M3.500 6v15M3.500 17c0-3.500 2-4.500 6-4.500q5.500 0 5.500-5.500V3" stroke="currentColor" fill="none" stroke-width="2.800"/><path d="M10.500 6.500L15 1l4.500 5.500z"/></svg>
<span class="t" style="left:125.0px;top:1630px;font-size:20px;color:#4a4a4a;letter-spacing:0.11px;">master</span>
<div class="b" style="left:202px;top:1621px;width:1.5px;height:36px;background:#d8d8d8;"></div>
<svg class="i" style="left:217.8px;top:1631.8px;width:15.5px;height:15.5px;color:#4a4a4a;" viewBox="0 0 15.5 15.5"><circle cx="7.750" cy="7.750" r="7.750"/><path d="M3.200 6.300h9.100v2.900H3.200z" fill="#ebebeb"/></svg>
<span class="t" style="left:240.0px;top:1630px;font-size:20px;color:#4a4a4a;">0</span>
<svg class="i" style="left:260.0px;top:1631.0px;width:18px;height:16px;color:#4a4a4a;" viewBox="0 0 18 16"><path d="M9 .3q.8 0 1.300.9l7.200 12.600q.9 1.900-1.200 2H1.700q-2.100-.100-1.200-2L7.700 1.200Q8.200.3 9 .3z"/><path d="M8 4.500h2v6H8z M8 11.800h2v2.200H8z" fill="#ebebeb"/></svg>
<span class="t" style="left:283.0px;top:1630px;font-size:20px;color:#4a4a4a;">0</span>
<div class="b" style="left:308px;top:1621px;width:1.5px;height:36px;background:#d8d8d8;"></div>
<div class="b" style="left:1856px;top:1621px;width:1.5px;height:36px;background:#d8d8d8;"></div>
<span class="t" style="left:1871.6px;top:1630px;font-size:20px;color:#4a4a4a;letter-spacing:-0.29px;">Select Symbol…</span>
<div class="b" style="left:2029px;top:1621px;width:1.5px;height:36px;background:#d8d8d8;"></div>
<svg class="i" style="left:2043.5px;top:1630.0px;width:23.5px;height:20px;color:#4a4a4a;" viewBox="0 0 23.5 20"><path d="M1.500 4.500Q1.500 1.500 4.500 1.500H8.500Q10.500 1.500 11 3.500H19Q22 3.500 22 6.500V15.500Q22 18.500 19 18.500H4.500Q1.500 18.500 1.500 15.500z" stroke="currentColor" fill="none" stroke-width="3" stroke-linejoin="round"/><path d="M2.500 5.800H21" stroke="currentColor" fill="none" stroke-width="2"/></svg>
<div class="b" style="left:2081px;top:1621px;width:1.5px;height:36px;background:#d8d8d8;"></div>
<span class="t" style="left:2115.6px;top:1630px;font-size:20px;color:#4a4a4a;letter-spacing:-0.48px;">Ln 34, Col 1</span>
<div class="b" style="left:2254px;top:1621px;width:1.5px;height:36px;background:#d8d8d8;"></div>
<span class="t" style="left:2269.0px;top:1630px;font-size:20px;color:#4a4a4a;letter-spacing:-0.44px;">Tabs: 8</span>
<div class="b" style="left:2345px;top:1621px;width:1.5px;height:36px;background:#d8d8d8;"></div>
<span class="t" style="left:2359.6px;top:1630px;font-size:20px;color:#4a4a4a;letter-spacing:-0.46px;">UTF-8</span>
<div class="b" style="left:2431px;top:1621px;width:1.5px;height:36px;background:#d8d8d8;"></div>
<span class="t" style="left:2445.7px;top:1630px;font-size:20px;color:#4a4a4a;letter-spacing:-2.52px;">LF</span>
<div class="b" style="left:2481.5px;top:1621px;width:1.5px;height:36px;background:#d8d8d8;"></div>
<span class="t" style="left:2496.3px;top:1630px;font-size:20px;color:#4a4a4a;">C</span>
<div class="b" style="left:2524px;top:1621px;width:73px;height:36px;background:#dedede;"></div>
<svg class="i" style="left:2549.0px;top:1629.5px;width:24px;height:20px;color:#4a4a4a;" viewBox="0 0 24 20"><rect x="3" y="11.500" width="18" height="5.500" opacity=".4"/><rect x="1.500" y="1.500" width="21" height="17" rx="3.200" stroke="currentColor" fill="none" stroke-width="3"/><path d="M2 11h20v2.400H2z"/></svg>
<div class="b" style="left:78px;top:55px;width:2519px;height:1602px;border-radius:18px;box-shadow:inset 0 1px 0 rgba(255,255,255,.65),inset 0 0 0 1px rgba(255,255,255,.3);pointer-events:none"></div>
</div></body></html>
